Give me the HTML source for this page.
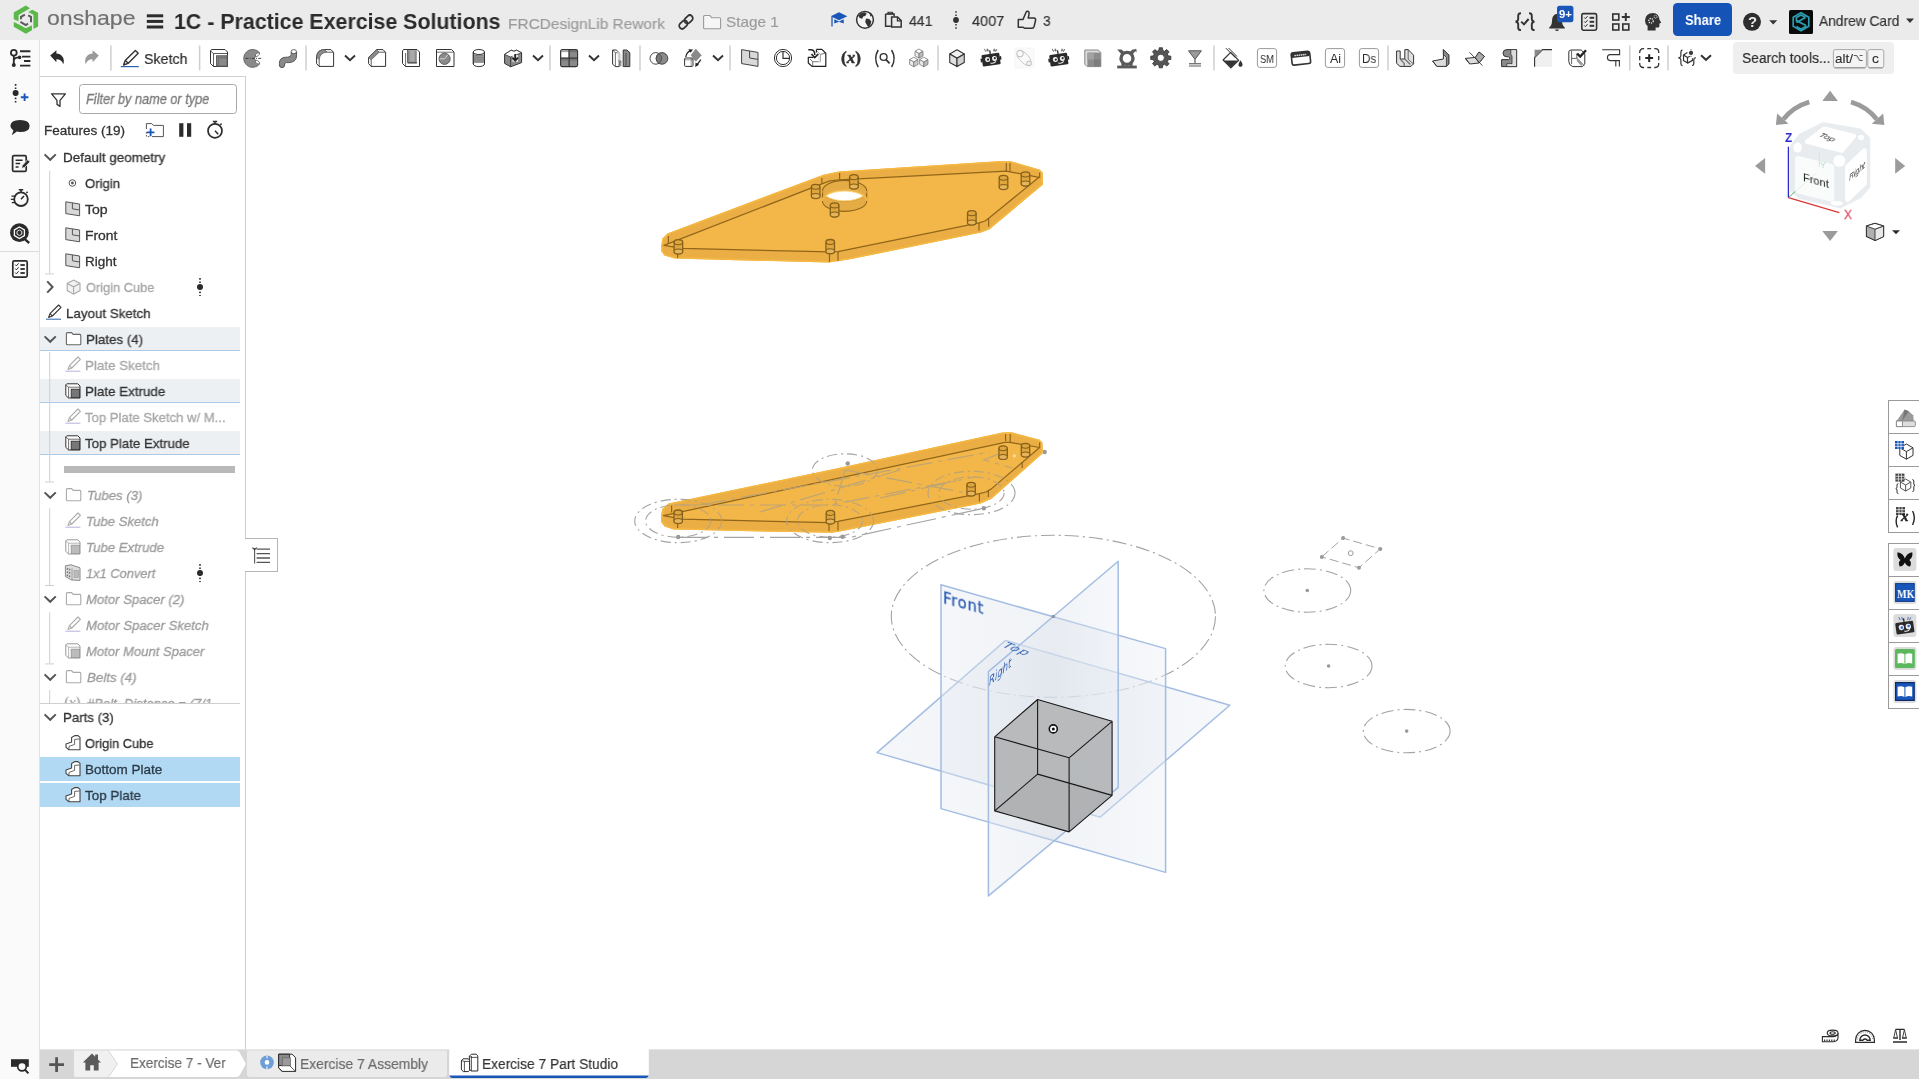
<!DOCTYPE html>
<html lang="en"><head><meta charset="utf-8"><title>1C - Practice Exercise Solutions | Exercise 7 Part Studio</title>
<style>
*{box-sizing:border-box;margin:0;padding:0}
html,body{width:1919px;height:1079px;overflow:hidden;background:#fff}
body{position:relative;font-family:"Liberation Sans",sans-serif;font-size:13.5px;color:#333}
.t{position:absolute;white-space:nowrap;transform-origin:0 0;display:block;will-change:transform}
.i{position:absolute;overflow:visible;display:block}
.b{position:absolute;display:block}
</style></head>
<body>
<div class="b" style="left:0px;top:0px;width:1919px;height:40px;background:#ebebeb"></div>
<div class="b" style="left:0px;top:40px;width:40px;height:1039px;background:#fafafa;border-right:1px solid #e2e2e2"></div>
<div class="b" style="left:40px;top:76px;width:206px;height:973px;border-top:1px solid #d0d0d0;border-right:1px solid #cfcfcf;background:#fff"></div>
<div class="b" style="left:40px;top:1049px;width:1879px;height:30px;background:#d6d6d6;border-top:1px solid #e6e6e6"></div>
<svg class="i" style="left:0;top:0" width="1919" height="1079" viewBox="0 0 1919 1079"><ellipse cx="1053.4" cy="616.3" rx="162.1" ry="81" fill="none" stroke="#a3a3a3" stroke-width="1.1" stroke-dasharray="14 4 2 4"/><ellipse cx="1307.3" cy="590.5" rx="43.4" ry="21.7" fill="none" stroke="#a3a3a3" stroke-width="1.1" stroke-dasharray="12 4 2 4"/><circle cx="1307.3" cy="590.5" r="1.8" fill="#999"/><ellipse cx="1328.6" cy="666" rx="43.4" ry="21.7" fill="none" stroke="#a3a3a3" stroke-width="1.1" stroke-dasharray="12 4 2 4"/><circle cx="1328.6" cy="666" r="1.8" fill="#999"/><ellipse cx="1406.7" cy="731.1" rx="43.4" ry="21.7" fill="none" stroke="#a3a3a3" stroke-width="1.1" stroke-dasharray="12 4 2 4"/><circle cx="1406.7" cy="731.1" r="1.8" fill="#999"/><polygon points="1321.8,556.9 1343.1,538.1 1380.3,548.9 1359.0,567.7" fill="none" stroke="#a3a3a3" stroke-width="1" stroke-dasharray="9 4"/><circle cx="1321.8" cy="556.9" r="2" fill="#999"/><circle cx="1343.1" cy="538.1" r="2" fill="#999"/><circle cx="1380.3" cy="548.9" r="2" fill="#999"/><circle cx="1359" cy="567.7" r="2" fill="#999"/><circle cx="1350.7" cy="553.2" r="2.4" fill="#fff" stroke="#999" stroke-width="1"/><ellipse cx="678.2" cy="521" rx="43.5" ry="21.7" fill="none" stroke="#a3a3a3" stroke-width="1.1" stroke-dasharray="10 4 2 4"/><ellipse cx="678.2" cy="521" rx="32.6" ry="16.2" fill="none" stroke="#a3a3a3" stroke-width="1.1" stroke-dasharray="10 4 2 4"/><ellipse cx="830" cy="521" rx="43.5" ry="21.7" fill="none" stroke="#a3a3a3" stroke-width="1.1" stroke-dasharray="10 4 2 4"/><ellipse cx="830" cy="521" rx="32.6" ry="16.2" fill="none" stroke="#a3a3a3" stroke-width="1.1" stroke-dasharray="10 4 2 4"/><ellipse cx="971.5" cy="493" rx="43.5" ry="21.7" fill="none" stroke="#a3a3a3" stroke-width="1.1" stroke-dasharray="10 4 2 4"/><ellipse cx="971.5" cy="493" rx="32.6" ry="16.2" fill="none" stroke="#a3a3a3" stroke-width="1.1" stroke-dasharray="10 4 2 4"/><ellipse cx="845" cy="470" rx="32.6" ry="16.2" fill="none" stroke="#a3a3a3" stroke-width="1.1" stroke-dasharray="10 4 2 4"/><path d="M678 537.4 H850 L985 508" fill="none" stroke="#a3a3a3" stroke-width="1.1" stroke-dasharray="30 6 4 6"/><circle cx="678.2" cy="537" r="2.2" fill="#999"/><circle cx="829.8" cy="538" r="2.2" fill="#999"/><circle cx="842.6" cy="536.7" r="2.2" fill="#999"/><circle cx="983.8" cy="508.3" r="2.2" fill="#999"/><circle cx="847.7" cy="463.5" r="2.2" fill="#999"/><circle cx="1044.7" cy="452" r="2.2" fill="#999"/><clipPath id="tp"><polygon points="661.2,245.5 662.5,238.5 667.5,233.4 823.5,174.7 839.0,171.6 998.0,161.2 1011.0,161.2 1040.0,169.8 1042.6,172.8 1043.0,184.5 989.5,229.2 981.0,232.6 850.0,259.3 829.0,262.6 675.0,258.6 664.5,255.6 661.5,251.5"/></clipPath><polygon points="661.2,245.5 662.5,238.5 667.5,233.4 823.5,174.7 839.0,171.6 998.0,161.2 1011.0,161.2 1040.0,169.8 1042.6,172.8 1043.0,184.5 989.5,229.2 981.0,232.6 850.0,259.3 829.0,262.6 675.0,258.6 664.5,255.6 661.5,251.5" fill="#ebae45"/><polygon points="661.2,245.5 662.5,238.5 667.5,233.4 823.5,174.7 839.0,171.6 998.0,161.2 1011.0,161.2 1040.0,169.8 1042.6,172.8 1043.0,184.5 989.5,229.2 981.0,232.6 850.0,259.3 829.0,262.6 675.0,258.6 664.5,255.6 661.5,251.5" fill="none" stroke="#f5b841" stroke-width="3" stroke-linejoin="round" clip-path="url(#tp)"/><polygon points="663.9,245.4 821.9,183.9 830.0,180.8 839.1,179.8 1006.3,171.1 1039.0,177.3 989.0,217.9 985.0,221.0 979.0,222.9 838.0,251.6 829.5,251.9 682.3,248.4" fill="#f2b649" stroke="#91661a" stroke-width="1.25" stroke-linejoin="round"/><path d="M829.5 252 L829.5 262" stroke="#91661a" stroke-width="1.2" fill="none"/><path d="M838 251.6 L838 261" stroke="#91661a" stroke-width="1.2" fill="none"/><path d="M979 223 L979 230.8" stroke="#91661a" stroke-width="1.2" fill="none"/><path d="M988.6 218.4 L988.6 226.8" stroke="#91661a" stroke-width="1.2" fill="none"/><path d="M1006.3 163 L1006.3 171" stroke="#91661a" stroke-width="1.2" fill="none"/><path d="M1010 163 L1010 171.4" stroke="#91661a" stroke-width="1.2" fill="none"/><path d="M1039.6 172.6 L1039.6 178" stroke="#91661a" stroke-width="1.2" fill="none"/><path d="M821.9 177.8 L821.9 184" stroke="#91661a" stroke-width="1.2" fill="none"/><path d="M839.6 173 L839.6 179.6" stroke="#91661a" stroke-width="1.2" fill="none"/><path d="M668.4 236 L668.4 243.4" stroke="#91661a" stroke-width="1.2" fill="none"/><path d="M677.6 249 L677.6 258" stroke="#91661a" stroke-width="1.2" fill="none"/><path d="M822.5 190.9 A22.1 10.5 0 0 1 866.7 190.9 V200.9 A22.1 10.5 0 0 1 822.5 200.9 Z" fill="#e5ab45" stroke="#91661a" stroke-width="1.1"/><path d="M822.5 190.9 A22.1 10.5 0 0 0 866.7 190.9" fill="none" stroke="#d9a03a" stroke-width="1"/><path d="M822.5 200.9 A22.1 10.5 0 0 1 866.7 200.9" fill="none" stroke="#efb548" stroke-width="2.4"/><path d="M826.0 195.9 A22.1 10.5 0 0 1 863.2 195.9 A22.1 10.5 0 0 1 826.0 195.9 Z" fill="#fff" stroke="#f8d078" stroke-width=".8" stroke-linejoin="round"/><path d="M674.1 242.2 v9.2 a4.3 2.5 0 0 0 8.6 0 v-9.2 a4.3 2.5 0 0 0 -8.6 0z" fill="#dfa63f" stroke="#86611a" stroke-width="1.3"/><ellipse cx="678.4" cy="251.4" rx="4.3" ry="2.5" fill="#e6b55a" stroke="#86611a" stroke-width="1.04"/><path d="M674.1 242.2 a4.3 2.5 0 0 0 8.6 0" fill="none" stroke="#86611a" stroke-width="1.04"/><path d="M825.9 242.0 v9.2 a4.3 2.5 0 0 0 8.6 0 v-9.2 a4.3 2.5 0 0 0 -8.6 0z" fill="#dfa63f" stroke="#86611a" stroke-width="1.3"/><ellipse cx="830.2" cy="251.2" rx="4.3" ry="2.5" fill="#e6b55a" stroke="#86611a" stroke-width="1.04"/><path d="M825.9 242.0 a4.3 2.5 0 0 0 8.6 0" fill="none" stroke="#86611a" stroke-width="1.04"/><path d="M811.4 186.8 v9.2 a4.3 2.5 0 0 0 8.6 0 v-9.2 a4.3 2.5 0 0 0 -8.6 0z" fill="#dfa63f" stroke="#86611a" stroke-width="1.3"/><ellipse cx="815.7" cy="196.0" rx="4.3" ry="2.5" fill="#e6b55a" stroke="#86611a" stroke-width="1.04"/><path d="M811.4 186.8 a4.3 2.5 0 0 0 8.6 0" fill="none" stroke="#86611a" stroke-width="1.04"/><path d="M830.3 205.4 v9.2 a4.3 2.5 0 0 0 8.6 0 v-9.2 a4.3 2.5 0 0 0 -8.6 0z" fill="#dfa63f" stroke="#86611a" stroke-width="1.3"/><ellipse cx="834.6" cy="214.6" rx="4.3" ry="2.5" fill="#e6b55a" stroke="#86611a" stroke-width="1.04"/><path d="M830.3 205.4 a4.3 2.5 0 0 0 8.6 0" fill="none" stroke="#86611a" stroke-width="1.04"/><path d="M849.6 177.2 v9.2 a4.3 2.5 0 0 0 8.6 0 v-9.2 a4.3 2.5 0 0 0 -8.6 0z" fill="#dfa63f" stroke="#86611a" stroke-width="1.3"/><ellipse cx="853.9" cy="186.4" rx="4.3" ry="2.5" fill="#e6b55a" stroke="#86611a" stroke-width="1.04"/><path d="M849.6 177.2 a4.3 2.5 0 0 0 8.6 0" fill="none" stroke="#86611a" stroke-width="1.04"/><path d="M999.2 177.8 v9.2 a4.3 2.5 0 0 0 8.6 0 v-9.2 a4.3 2.5 0 0 0 -8.6 0z" fill="#dfa63f" stroke="#86611a" stroke-width="1.3"/><ellipse cx="1003.5" cy="187.0" rx="4.3" ry="2.5" fill="#e6b55a" stroke="#86611a" stroke-width="1.04"/><path d="M999.2 177.8 a4.3 2.5 0 0 0 8.6 0" fill="none" stroke="#86611a" stroke-width="1.04"/><path d="M1021.2 174.4 v9.2 a4.3 2.5 0 0 0 8.6 0 v-9.2 a4.3 2.5 0 0 0 -8.6 0z" fill="#dfa63f" stroke="#86611a" stroke-width="1.3"/><ellipse cx="1025.5" cy="183.6" rx="4.3" ry="2.5" fill="#e6b55a" stroke="#86611a" stroke-width="1.04"/><path d="M1021.2 174.4 a4.3 2.5 0 0 0 8.6 0" fill="none" stroke="#86611a" stroke-width="1.04"/><path d="M967.5 213.2 v9.2 a4.3 2.5 0 0 0 8.6 0 v-9.2 a4.3 2.5 0 0 0 -8.6 0z" fill="#dfa63f" stroke="#86611a" stroke-width="1.3"/><ellipse cx="971.8" cy="222.4" rx="4.3" ry="2.5" fill="#e6b55a" stroke="#86611a" stroke-width="1.04"/><path d="M967.5 213.2 a4.3 2.5 0 0 0 8.6 0" fill="none" stroke="#86611a" stroke-width="1.04"/><clipPath id="bp0"><polygon points="660.9,516.0 662.6,508.5 668.6,503.4 840.0,467.8 1002.5,432.4 1011.4,432.2 1039.5,439.8 1042.4,442.6 1042.8,453.3 991.5,498.7 980.7,503.4 845.0,530.6 832.0,532.8 673.7,529.6 664.5,526.5 661.2,522.0"/></clipPath><polygon points="660.9,516.0 662.6,508.5 668.6,503.4 840.0,467.8 1002.5,432.4 1011.4,432.2 1039.5,439.8 1042.4,442.6 1042.8,453.3 991.5,498.7 980.7,503.4 845.0,530.6 832.0,532.8 673.7,529.6 664.5,526.5 661.2,522.0" fill="#ebae45"/><polygon points="660.9,516.0 662.6,508.5 668.6,503.4 840.0,467.8 1002.5,432.4 1011.4,432.2 1039.5,439.8 1042.4,442.6 1042.8,453.3 991.5,498.7 980.7,503.4 845.0,530.6 832.0,532.8 673.7,529.6 664.5,526.5 661.2,522.0" fill="none" stroke="#f5b841" stroke-width="3" stroke-linejoin="round" clip-path="url(#bp0)"/><polygon points="663.5,515.7 1005.0,442.4 1010.1,442.4 1039.6,447.5 991.0,489.1 986.0,492.0 979.4,493.6 838.0,521.4 828.0,522.6 682.7,519.1" fill="#f2b649" stroke="#91661a" stroke-width="1.25" stroke-linejoin="round"/><path d="M1005.6 434 L1005.6 441" stroke="#91661a" stroke-width="1.2" fill="none"/><path d="M1010.2 434 L1010.2 442.4" stroke="#91661a" stroke-width="1.2" fill="none"/><path d="M979.4 494 L979.4 501.4" stroke="#91661a" stroke-width="1.2" fill="none"/><path d="M988.4 490.4 L988.4 497" stroke="#91661a" stroke-width="1.2" fill="none"/><path d="M1022.2 462 L1022.2 468" stroke="#91661a" stroke-width="1.2" fill="none"/><path d="M829 523 L829 531" stroke="#91661a" stroke-width="1.2" fill="none"/><path d="M838 521.4 L838 530.4" stroke="#91661a" stroke-width="1.2" fill="none"/><path d="M671.6 505.4 L671.6 512.6" stroke="#91661a" stroke-width="1.2" fill="none"/><path d="M677.6 520 L677.6 528" stroke="#91661a" stroke-width="1.2" fill="none"/><path d="M1039.6 442.6 L1039.6 448" stroke="#91661a" stroke-width="1.2" fill="none"/><clipPath id="bp"><polygon points="660.9,516.0 662.6,508.5 668.6,503.4 840.0,467.8 1002.5,432.4 1011.4,432.2 1039.5,439.8 1042.4,442.6 1042.8,453.3 991.5,498.7 980.7,503.4 845.0,530.6 832.0,532.8 673.7,529.6 664.5,526.5 661.2,522.0"/></clipPath><g clip-path="url(#bp)" opacity=".9"><ellipse cx="678.2" cy="521" rx="43.5" ry="21.7" fill="none" stroke="#b9a37a" stroke-width="1.1" stroke-dasharray="10 4 2 4"/><ellipse cx="678.2" cy="521" rx="32.6" ry="16.2" fill="none" stroke="#b9a37a" stroke-width="1.1" stroke-dasharray="10 4 2 4"/><ellipse cx="830" cy="521" rx="43.5" ry="21.7" fill="none" stroke="#b9a37a" stroke-width="1.1" stroke-dasharray="10 4 2 4"/><ellipse cx="830" cy="521" rx="32.6" ry="16.2" fill="none" stroke="#b9a37a" stroke-width="1.1" stroke-dasharray="10 4 2 4"/><ellipse cx="971.5" cy="493" rx="43.5" ry="21.7" fill="none" stroke="#b9a37a" stroke-width="1.1" stroke-dasharray="10 4 2 4"/><ellipse cx="971.5" cy="493" rx="32.6" ry="16.2" fill="none" stroke="#b9a37a" stroke-width="1.1" stroke-dasharray="10 4 2 4"/><ellipse cx="845" cy="470" rx="32.6" ry="16.2" fill="none" stroke="#b9a37a" stroke-width="1.1" stroke-dasharray="10 4 2 4"/><path d="M676 505 H830 L975 477 M845 470 L972 494 M1003 452 L984 460 L1012 468 M700 505 L990 452 M760 512 L900 470 M880 498 L960 480 M845 470 L830 521" fill="none" stroke="#b9a37a" stroke-width="1.2" stroke-dasharray="26 6 4 6"/></g><path d="M674.0 512.5 v8.6 a4.2 2.5 0 0 0 8.4 0 v-8.6 a4.2 2.5 0 0 0 -8.4 0z" fill="#dfa63f" stroke="#86611a" stroke-width="1.3"/><ellipse cx="678.2" cy="521.1" rx="4.2" ry="2.5" fill="#e6b55a" stroke="#86611a" stroke-width="1.04"/><path d="M674.0 512.5 a4.2 2.5 0 0 0 8.4 0" fill="none" stroke="#86611a" stroke-width="1.04"/><path d="M826.2 512.9 v8.6 a4.2 2.5 0 0 0 8.4 0 v-8.6 a4.2 2.5 0 0 0 -8.4 0z" fill="#dfa63f" stroke="#86611a" stroke-width="1.3"/><ellipse cx="830.4" cy="521.5" rx="4.2" ry="2.5" fill="#e6b55a" stroke="#86611a" stroke-width="1.04"/><path d="M826.2 512.9 a4.2 2.5 0 0 0 8.4 0" fill="none" stroke="#86611a" stroke-width="1.04"/><path d="M966.9 484.8 v8.6 a4.2 2.5 0 0 0 8.4 0 v-8.6 a4.2 2.5 0 0 0 -8.4 0z" fill="#dfa63f" stroke="#86611a" stroke-width="1.3"/><ellipse cx="971.1" cy="493.4" rx="4.2" ry="2.5" fill="#e6b55a" stroke="#86611a" stroke-width="1.04"/><path d="M966.9 484.8 a4.2 2.5 0 0 0 8.4 0" fill="none" stroke="#86611a" stroke-width="1.04"/><path d="M998.9 448.3 v8.6 a4.2 2.5 0 0 0 8.4 0 v-8.6 a4.2 2.5 0 0 0 -8.4 0z" fill="#dfa63f" stroke="#86611a" stroke-width="1.3"/><ellipse cx="1003.1" cy="456.9" rx="4.2" ry="2.5" fill="#e6b55a" stroke="#86611a" stroke-width="1.04"/><path d="M998.9 448.3 a4.2 2.5 0 0 0 8.4 0" fill="none" stroke="#86611a" stroke-width="1.04"/><path d="M1021.3 445.8 v8.6 a4.2 2.5 0 0 0 8.4 0 v-8.6 a4.2 2.5 0 0 0 -8.4 0z" fill="#dfa63f" stroke="#86611a" stroke-width="1.3"/><ellipse cx="1025.5" cy="454.4" rx="4.2" ry="2.5" fill="#e6b55a" stroke="#86611a" stroke-width="1.04"/><path d="M1021.3 445.8 a4.2 2.5 0 0 0 8.4 0" fill="none" stroke="#86611a" stroke-width="1.04"/><circle cx="1014.4" cy="455.8" r="1.6" fill="#f3dcae"/><linearGradient id="pg" x1="0" y1="0" x2="1" y2="0"><stop offset="0" stop-color="#e6ebf2" stop-opacity=".42"/><stop offset=".5" stop-color="#dbe1ea" stop-opacity=".4"/><stop offset="1" stop-color="#eaeff5" stop-opacity=".42"/></linearGradient><polygon points="877.0,752.6 1005.6,640.4 1229.8,705.2 1100.2,817.1" fill="url(#pg)" stroke="#a3bde2" stroke-width="1.5" stroke-linejoin="round"/><polygon points="941.0,584.8 1165.6,648.6 1165.6,872.4 941.0,808.6" fill="url(#pg)" stroke="#a3bde2" stroke-width="1.5" stroke-linejoin="round"/><polygon points="1118.2,561.2 1118.2,787.4 988.4,895.9 988.4,671.6" fill="url(#pg)" stroke="#a3bde2" stroke-width="1.5" stroke-linejoin="round"/><circle cx="1053.3" cy="616.5" r="1.8" fill="#8a98a8"/><polygon points="994.7,736.8 1037.6,699.5 1112.1,721.3 1112.1,795.4 1069.1,831.9 994.7,810.9" fill="#b3b5b7" fill-opacity=".93"/><polygon points="994.7,736.8 1037.6,699.5 1112.1,721.3 1069.1,757.8" fill="#b9bbbd" fill-opacity=".6"/><polygon points="994.7,736.8 1069.1,757.8 1069.1,831.9 994.7,810.9" fill="#b6b8ba" fill-opacity=".5"/><polygon points="994.7,810.9 1037.6,774.1 1112.1,795.4 1069.1,831.9" fill="#a9abad" fill-opacity=".5"/><path d="M994.7 736.8 L1037.6 699.5 L1112.1 721.3 L1069.1 757.8z M994.7 810.9 L1037.6 774.1 L1112.1 795.4 L1069.1 831.9z M994.7 736.8 L994.7 810.9 M1037.6 699.5 L1037.6 774.1 M1112.1 721.3 L1112.1 795.4 M1069.1 757.8 L1069.1 831.9" fill="none" stroke="#1a1a1a" stroke-width="1.1" stroke-linejoin="round"/><path d="M1118.2 721 V787.4 L1100 802 M1069 831 L1165.6 858" stroke="#a3bde2" stroke-width="1.2" fill="none" opacity=".0"/><circle cx="1053.3" cy="728.9" r="4" fill="#fff" stroke="#111" stroke-width="1.6"/><circle cx="1053.3" cy="728.9" r="1.5" fill="#111"/></svg>
<span class="t" style="left:943px;top:589px;font-family:'DejaVu Sans',sans-serif;font-size:15.5px;line-height:18px;letter-spacing:.7px;color:#2f5fb3;-webkit-text-stroke:.3px #2f5fb3;transform:matrix(.96,.26,0,1,0,0)">Front</span>
<span class="t" style="left:1008.5px;top:639.5px;font-family:'DejaVu Sans',sans-serif;font-size:14px;line-height:16px;letter-spacing:1px;color:#2f5fb3;font-style:italic;transform:matrix(.9,.36,-.55,.5,0,0)">Top</span>
<span class="t" style="left:988.8px;top:675px;font-family:'DejaVu Sans',sans-serif;font-size:12.5px;line-height:14px;color:#2f5fb3;font-style:italic;transform:matrix(.68,-.6,0,1,0,0)">Right</span>
<svg class="i" style="left:0;top:0" width="1919" height="40" viewBox="0 0 1919 40"><polygon points="13.75,12.42 25.80,5.56 30.06,8.23 18.57,15.02 18.57,21.32 13.75,19.28" fill="#5ab947"/><polygon points="32.29,9.71 38.11,12.79 38.11,26.62 33.40,29.11 33.40,14.65 28.21,11.94" fill="#5ab947"/><polygon points="13.75,21.88 18.01,24.10 25.80,28.36 31.92,25.21 31.92,30.22 25.80,33.82 13.75,26.77" fill="#5ab947"/><path d="M24.87,14.65 L20.98,16.87 L20.98,19.28 M20.42,21.88 L25.80,25.03 L28.02,23.73 M30.99,22.25 L30.99,16.87 L28.21,15.39" fill="none" stroke="#5a5a5a" stroke-width="2"/><rect x="146.8" y="14.3" width="16.4" height="3" fill="#2b2b2b"/><rect x="146.8" y="19.9" width="16.4" height="3" fill="#2b2b2b"/><rect x="146.8" y="25.5" width="16.4" height="3" fill="#2b2b2b"/><g transform="translate(686,22) rotate(-45)" fill="none" stroke="#333" stroke-width="1.7"><rect x="-8.4" y="-3" width="9.4" height="6" rx="3"/><rect x="-1" y="-3" width="9.4" height="6" rx="3"/></g><path d="M703.6 16.5 a1 1 0 0 1 1 -1 h5.2 l1.8 2.2 h8 a1 1 0 0 1 1 1 v9 a1 1 0 0 1 -1 1 h-15 a1 1 0 0 1 -1 -1 z" fill="#f6f6f6" stroke="#9a9a9a" stroke-width="1.1"/><path d="M839 12.3 l8.3 3.9 l-8.3 4 l-8.3 -4 z" fill="#1a56b8"/><path d="M834.3 19.3 v4.2 l4.7 -1.8 l4.7 1.8 v-4.2 l-4.7 2.2 z" fill="#1a56b8"/><path d="M832 17 v9.5" stroke="#1a56b8" stroke-width="1.3" fill="none"/><circle cx="865" cy="19.8" r="8.4" fill="#f4f4f4" stroke="#333" stroke-width="1.5"/><path d="M860.5 13.5 l4 -1.2 l2.2 1.5 l-1.5 2.2 l-2 0.5 l-1 2.3 l-2.5 -0.8 l-1.2 -2 z M866 18.5 l3.2 0.6 l2.2 2.4 l-1 3.4 l-2.2 2.4 l-1.4 -2.6 l-1.6 -2.6 z M869.5 13.2 l2.4 2.5 l-1.6 0.8 z" fill="#333"/><path d="M885.6 14 h8.5 v2.4 M885.6 14 v12.2 h5.2" fill="none" stroke="#333" stroke-width="1.5"/><rect x="888" y="12.3" width="4.6" height="1.6" fill="none" stroke="#333" stroke-width="1"/><path d="M891.6 17 h6 l3.6 3.6 v6.4 h-9.6 z" fill="none" stroke="#333" stroke-width="1.5"/><path d="M897.4 17 v3.8 h3.8" fill="none" stroke="#333" stroke-width="1.2"/><circle cx="956" cy="20" r="2.9" fill="#333"/><path d="M956 11.2 v18" stroke="#333" stroke-width="1.5" stroke-dasharray="1.6 1.6" fill="none"/><path d="M1018.3 19.6 h4.6 l3.2 -7.4 q0.6 -1.3 1.8 -0.9 q1.6 0.6 1.2 2.6 l-0.9 4.2 h5.8 q1.9 0.2 1.6 2.2 l-1.5 6.2 q-0.5 1.7 -2 1.7 h-7.6 l-1.8 -1 h-4.4 z" fill="none" stroke="#333" stroke-width="1.5" stroke-linejoin="round"/><g fill="none" stroke="#333" stroke-width="1.9"><path d="M1521 13.3 q-2.800 0 -2.800 2.400 v3.400 q0 2.200 -2.600 2.600 q2.600 0.400 2.600 2.600 v3.400 q0 2.400 2.800 2.400"/><path d="M1529 13.3 q2.800 0 2.800 2.400 v3.400 q0 2.200 2.600 2.600 q-2.600 0.400 -2.600 2.600 v3.400 q0 2.400 2.800 2.400"/><path d="M1521.2 21.6 l2.8 2.8 l4.6 -5.4" stroke-width="2"/></g><path d="M1557 13.8 q-5 0.8 -5 7.2 q0 4.2 -2.8 6.4 v1.2 h15.6 v-1.2 q-2.8 -2.2 -2.8 -6.4 q0 -6.4 -5 -7.2 z M1555 29.4 h4 q-0.4 1.6 -2 1.6 t-2 -1.6z" fill="#333"/><rect x="1557" y="5.8" width="16.4" height="16.4" rx="2.5" fill="#1a56b8"/><rect x="1581.8" y="13.6" width="14.8" height="16.6" rx="1.6" fill="none" stroke="#333" stroke-width="1.6"/><path d="M1589.6 17.8 h4.6" stroke="#333" stroke-width="2" fill="none"/><path d="M1584.2 17.400000000000002 l1.2 1.3 l2.2 -2.6" stroke="#333" stroke-width="1" fill="none"/><path d="M1589.6 21.8 h4.6" stroke="#333" stroke-width="2" fill="none"/><path d="M1584.2 21.400000000000002 l1.2 1.3 l2.2 -2.6" stroke="#333" stroke-width="1" fill="none"/><path d="M1589.6 25.8 h4.6" stroke="#333" stroke-width="2" fill="none"/><path d="M1584.2 25.400000000000002 l1.2 1.3 l2.2 -2.6" stroke="#333" stroke-width="1" fill="none"/><g fill="none" stroke="#333" stroke-width="1.6"><rect x="1612.8" y="14" width="6" height="6"/><rect x="1612.8" y="24" width="6" height="6"/><rect x="1622.8" y="24" width="6" height="6"/><path d="M1625.8 13 v8 M1621.8 17 h8" stroke-width="2"/></g><path d="M1653 13 q-7.6 0.4 -8 7.4 q0 3.4 2.6 5.6 v4.6 h8 v-3 h2.4 q1.4 0 1.4 -1.6 v-2.4 l1.8 -0.8 l-1.8 -3.4 q-0.4 -6.2 -6.4 -6.4 z" fill="#333"/><circle cx="1651" cy="20.8" r="2.3" fill="none" stroke="#ebebeb" stroke-width="1.3" stroke-dasharray="1.2 0.9"/><circle cx="1655.6" cy="16.8" r="1.5" fill="none" stroke="#ebebeb" stroke-width="1" stroke-dasharray="0.9 0.7"/><rect x="1673" y="3" width="59" height="33" rx="4.5" fill="#1553b7"/><circle cx="1752" cy="21.8" r="9" fill="#2e2e2e"/><path d="M1769.2 20.2 h8 l-4 4.4 z" fill="#333"/><rect x="1789" y="10" width="24" height="24" rx="1.5" fill="#0a0a0a"/><g fill="none" stroke="#2a9db0" stroke-width="1.7"><path d="M1801 12.8 l7.8 4.5 v9 l-7.8 4.5 l-7.8 -4.5 v-9 z"/><path d="M1805.6 17.6 l-4.6 -2.6 l-4.6 2.6 v3 l9.2 4.6 v1.4 l-4.6 2.6 l-4.6 -2.6 M1796.4 22.6 l9.2 -5"/></g><path d="M1906 18.6 h8 l-4 4.4 z" fill="#333"/></svg>
<span class="t" style="left:46.58px;top:6px;font-size:20.5px;line-height:23px;color:#707070;-webkit-text-stroke:0.18px #707070;transform:scaleX(1.1252);">onshape</span>
<span class="t" style="left:174.32px;top:9px;font-size:21.8px;line-height:25px;color:#2b2b2b;font-weight:700;transform:scaleX(0.9800);">1C - Practice Exercise Solutions</span>
<span class="t" style="left:508.27px;top:15px;font-size:15.5px;line-height:17px;color:#9b9b9b;-webkit-text-stroke:0.18px #9b9b9b;transform:scaleX(0.9949);">FRCDesignLib Rework</span>
<span class="t" style="left:725.81px;top:13px;font-size:15px;line-height:17px;color:#9b9b9b;-webkit-text-stroke:0.18px #9b9b9b;transform:scaleX(1.0194);">Stage 1</span>
<span class="t" style="left:909.12px;top:12px;font-size:15px;line-height:17px;color:#333;-webkit-text-stroke:0.18px #333;transform:scaleX(0.9375);">441</span>
<span class="t" style="left:971.61px;top:12px;font-size:15px;line-height:17px;color:#333;-webkit-text-stroke:0.18px #333;transform:scaleX(0.9683);">4007</span>
<span class="t" style="left:1043.25px;top:12px;font-size:15px;line-height:17px;color:#333;-webkit-text-stroke:0.18px #333;transform:scaleX(0.9123);">3</span>
<span class="t" style="left:1559.01px;top:8px;font-size:10.5px;line-height:12px;color:#fff;font-weight:700;transform:scaleX(1.0731);">9+</span>
<span class="t" style="left:1684.61px;top:11px;font-size:15.5px;line-height:17px;color:#fff;font-weight:700;transform:scaleX(0.8388);">Share</span>
<span class="t" style="left:1747.53px;top:14px;font-size:14.5px;line-height:16px;color:#ebebeb;font-weight:700;transform:scaleX(1.0277);">?</span>
<span class="t" style="left:1819.00px;top:12px;font-size:15px;line-height:17px;color:#333;-webkit-text-stroke:0.18px #333;transform:scaleX(0.9174);">Andrew Card</span>
<svg class="i" style="left:0;top:0" width="1919" height="80" viewBox="0 0 1919 80"><g fill="none" stroke="#2b2b2b" stroke-width="1.8"><circle cx="13.8" cy="52.8" r="2.9"/><path d="M13.8 55.8 v8.2 M13.8 60.5 q0 -2.6 4.8 -3.2"/><path d="M20 51.2 h10.4 M22 56.6 h8.4 M24 61 h6.4 M20 65.6 h10.4" stroke-width="1.9"/></g><circle cx="13.8" cy="65" r="2" fill="#2b2b2b"/><circle cx="19.6" cy="57.4" r="1.8" fill="#2b2b2b"/><path d="M50.2 55.6 l6.2 -5.4 v3.4 q6.6 0.4 7.4 7 q0.2 2 -0.6 3.6 q-1.4 -5 -6.8 -5 v3 z" fill="#2b2b2b"/><path d="M98.8 55.6 l-6.2 -5.4 v3.4 q-6.6 0.4 -7.4 7 q-0.2 2 0.6 3.6 q1.4 -5 6.8 -5 v3 z" fill="#9a9a9a"/><rect x="110.15" y="45.5" width="1.5" height="25" fill="#cfcfcf"/><rect x="198.85" y="45.5" width="1.5" height="25" fill="#cfcfcf"/><rect x="305.25" y="45.5" width="1.5" height="25" fill="#cfcfcf"/><rect x="549.25" y="45.5" width="1.5" height="25" fill="#cfcfcf"/><rect x="639.25" y="45.5" width="1.5" height="25" fill="#cfcfcf"/><rect x="729.25" y="45.5" width="1.5" height="25" fill="#cfcfcf"/><rect x="937.25" y="45.5" width="1.5" height="25" fill="#cfcfcf"/><rect x="1213.25" y="45.5" width="1.5" height="25" fill="#cfcfcf"/><rect x="1387.25" y="45.5" width="1.5" height="25" fill="#cfcfcf"/><rect x="1629.05" y="45.5" width="1.5" height="25" fill="#cfcfcf"/><rect x="1667.25" y="45.5" width="1.5" height="25" fill="#cfcfcf"/><g fill="none" stroke="#333" stroke-width="1.4" stroke-linejoin="round"><path d="M123.6 65 l1.6 -4.4 l10.2 -10.2 l2.8 2.8 l-10.2 10.2 z"/><path d="M125.4 60.4 l2.8 2.8"/></g><path d="M120.8 66.6 h18" stroke="#2a62b0" stroke-width="1.2"/><g transform="translate(210,49) scale(1)"><path d="M1.5 .5 h13.5 l2.5 2.5 v14.5 h-14 l-3 -3 v-12.5 z" fill="#fff" stroke="#333" stroke-width="1"/><path d="M.5 2 l3 2.5 h14 M3.5 4.5 v13" fill="none" stroke="#333" stroke-width=".8"/><rect x="6.6" y="6.8" width="10.6" height="10.4" fill="#8a8a8a" stroke="#555" stroke-width="1"/><path d="M6.6 6.8 l2 2 h8.6 M8.6 8.8 v8.4" stroke="#666" stroke-width=".8" fill="none"/></g><g transform="translate(244.4,49) scale(1)"><path d="M9.2 9.4 L15.6 4.2 A9 9 0 1 0 15.6 14.6 Z" fill="#8a8a8a" stroke="#555" stroke-width=".8"/><ellipse cx="13" cy="5.6" rx="2.3" ry="1.4" transform="rotate(-40 13 5.6)" fill="#fff" stroke="#555" stroke-width=".7"/><ellipse cx="13" cy="13.2" rx="2.3" ry="1.4" transform="rotate(40 13 13.2)" fill="#fff" stroke="#555" stroke-width=".7"/><path d="M1 9.4 h17" stroke="#333" stroke-width=".9" stroke-dasharray="3 1.2 1 1.2"/></g><g transform="translate(277.8,49) scale(1)"><path d="M13.4 3 v2.6 q0 2.4 -3.4 2.6 h-2 q-6.4 .4 -6.4 6.2 v1.6 q0 2.6 2.6 2.6 t2.6 -2.6 v-1 q0 -1.4 1.8 -1.4 h2.4 q7.8 -.4 7.8 -7.4 v-3.2 z" fill="#8a8a8a" stroke="#555" stroke-width="1"/><ellipse cx="16" cy="2.6" rx="2.7" ry="2" fill="#fff" stroke="#555" stroke-width=".9"/></g><g transform="translate(316,49) scale(1)"><path d="M.6 8 q.4 -7.4 8 -7.4 h6.4 l2.6 2.8 v14 h-14.6 l-2.4 -2.8 z" fill="#fff" stroke="#333" stroke-width="1"/><path d="M.6 8 q.4 -7.4 8 -7.4 l2.6 2.6 q-7.4 .2 -8 7.6 z" fill="#8a8a8a" stroke="#555" stroke-width=".7"/><path d="M3.2 10.8 v6.6 M11.2 3.2 h6.2" stroke="#333" stroke-width=".8" fill="none"/></g><path d="M345 55.6 l5 4.6 l5 -4.6" fill="none" stroke="#333" stroke-width="2"/><g transform="translate(368,49) scale(1)"><path d="M.6 8.4 l8 -7.8 h6.4 l2.6 2.8 v14 h-14.6 l-2.4 -2.8 z" fill="#fff" stroke="#333" stroke-width="1"/><path d="M.6 8.4 l8 -7.8 l2.6 2.6 l-8 7.6 z" fill="#8a8a8a" stroke="#555" stroke-width=".7"/><path d="M3.2 10.8 v6.6 M11.2 3.2 h6.2" stroke="#333" stroke-width=".8" fill="none"/></g><g transform="translate(402,49) scale(1)"><path d="M1.5 .5 h13.5 l2.5 2.5 v14.5 h-14 l-3 -3 v-12.5 z" fill="#fff" stroke="#333" stroke-width="1"/><path d="M5.6 1.2 h9.2 v13.6 h-9.2 z" fill="#8a8a8a"/><path d="M7.6 1.2 h5.2 v11.4 h-5.2 z" fill="#a8a8a8"/><path d="M3.6 4 v13.4 M5.6 1 v12.6 h9.4" fill="none" stroke="#444" stroke-width=".8"/></g><g transform="translate(436,49) scale(1)"><path d="M.5 .5 h15 l2.5 2.5 v14.5 h-17.5 z" fill="#fff" stroke="#333" stroke-width="1"/><circle cx="8.6" cy="9.8" r="5.6" fill="#8a8a8a" stroke="#555" stroke-width=".9"/><path d="M8.6 9.8 l3.2 -4 M8.6 9.8 h-5" stroke="#ddd" stroke-width=".9"/><path d="M.5 3.2 h17" stroke="#333" stroke-width=".7"/></g><g transform="translate(472.8,49) scale(1)"><path d="M.5 3 v12 a5.6 2.6 0 0 0 11.2 0 v-12" fill="#fff" stroke="#333" stroke-width="1"/><rect x=".8" y="5.4" width="10.6" height="8.6" fill="#9a9a9a"/><path d="M.8 6.6 h10.6 M.8 8.4 h10.6 M.8 10.2 h10.6 M.8 12 h10.6" stroke="#777" stroke-width=".7"/><ellipse cx="6.1" cy="3" rx="5.6" ry="2.5" fill="#fff" stroke="#333" stroke-width="1"/><path d="M.5 3 v12 M11.7 3 v12" stroke="#333" stroke-width="1"/></g><g transform="translate(504,49) scale(1)"><path d="M.6 5.4 l6.6 -4.2 q2.6 2.2 5.4 0 l5 2.6 v9.8 l-11 4.2 l-6 -3.4 z" fill="#8a8a8a" stroke="#333" stroke-width="1"/><path d="M6.6 8 l11 -4.2 l-5 -2.6 q-2.8 2.2 -5.4 0 l-6.6 4.2 z" fill="#fff" stroke="#333" stroke-width=".8"/><path d="M6.6 8 v9.6" stroke="#333" stroke-width=".8"/><path d="M8.4 6 h5.6 v6.8 h-5.6 z" fill="#eee" opacity=".9"/><path d="M11.2 5 v6 M8.4 8.6 l2.8 3 l2.8 -3" fill="none" stroke="#222" stroke-width="1.8"/></g><path d="M533 55.6 l5 4.6 l5 -4.6" fill="none" stroke="#333" stroke-width="2"/><g transform="translate(560,49) scale(1)"><rect x=".6" y=".6" width="17" height="17" rx="1.6" fill="#8a8a8a" stroke="#333" stroke-width="1.1"/><rect x="1.4" y="1.6" width="7.2" height="7.2" fill="#fff"/><path d="M9.1 .6 v17 M.6 9.2 h17" stroke="#333" stroke-width="1.2"/><path d="M1.2 2.6 h7.4 M10 2.6 h7 M10 11 h7 M1.2 11 h7.4" stroke="#555" stroke-width=".6"/></g><path d="M589 55.6 l5 4.6 l5 -4.6" fill="none" stroke="#333" stroke-width="2"/><g transform="translate(612,49) scale(1)"><path d="M.6 1 h3.6 l3 2.6 v14 h-4 l-2.6 -2.6 z" fill="#fff" stroke="#333" stroke-width="1"/><path d="M3.4 3.8 v13.6 M.6 1 l2.8 2.8 h3.6" stroke="#333" stroke-width=".7" fill="none"/><path d="M5.6 1.4 l4 4 v9 l-4 -3 z" fill="#ddd" opacity=".8"/><path d="M11.2 1 h3.6 l3 2.6 v14 h-6.6 z" fill="#8a8a8a" stroke="#333" stroke-width="1"/><path d="M14 3.8 v13.6" stroke="#333" stroke-width=".7"/><path d="M6.4 12 h2.4 v5.4" stroke="#333" stroke-width=".7" fill="none"/></g><g transform="translate(649.4,49) scale(1)"><circle cx="6.4" cy="9.4" r="5.8" fill="#fff" stroke="#444" stroke-width="1"/><circle cx="12.6" cy="9.4" r="5.8" fill="#8a8a8a" stroke="#444" stroke-width="1"/><path d="M9.5 4.5 a5.8 5.8 0 0 1 0 9.8 a5.8 5.8 0 0 1 0 -9.8z" fill="#777" stroke="#444" stroke-width=".8"/></g><g transform="translate(683.8,49) scale(1)"><path d="M12 .2 l5.4 6 l-5.4 6 l-4.6 -6 z" fill="#8a8a8a" stroke="#666" stroke-width=".6"/><rect x=".8" y="9" width="8.4" height="8.4" rx="1" fill="#fff" stroke="#333" stroke-width="1"/><path d="M.8 10.8 h8.4 M7.4 9 v8.4" stroke="#333" stroke-width=".5"/><path d="M2 8 q.6 -5 5.4 -6.6" fill="none" stroke="#222" stroke-width="1.3"/><path d="M4.6 .2 l4.6 .2 l-2.4 3.4 z" fill="#222"/><path d="M17 10.6 l-4.4 6" fill="none" stroke="#222" stroke-width="1.3"/><path d="M11.4 18 l.4 -4.4 l3.4 2.2 z" fill="#222"/></g><path d="M713 55.6 l5 4.6 l5 -4.6" fill="none" stroke="#333" stroke-width="2"/><g transform="translate(741,49) scale(1)"><path d="M.6 .6 l16.4 2.8 v14 l-16.4 -2.8 z" fill="#d9d9d9" stroke="#444" stroke-width="1"/><path d="M8.6 2 v7 l8.4 1.4" fill="none" stroke="#444" stroke-width="1"/></g><g transform="translate(774,49) scale(1)"><circle cx="9" cy="9" r="8.6" fill="#fff" stroke="#333" stroke-width="1"/><circle cx="9" cy="9" r="6.6" fill="#fff" stroke="#333" stroke-width="1"/><path d="M9 2.4 v7 h6.6" fill="none" stroke="#333" stroke-width="1.2"/></g><path d="M816.4 49.4 h5.5 l3.9 3.8 v13.2 h-13.8 l-3.7 -3.4 v-5.7 h5.2" fill="#fff" stroke="#222" stroke-width="1.2" stroke-linejoin="round"/><path d="M816.4 49.4 v3" stroke="#222" stroke-width="1.2"/><path d="M810.1 59.1 l2.6 2.6 v4.7 M812.7 61.7 h7.6 v-7.3 l-2.9 -3.1 M820.3 54.4 l5.5 -1.3" fill="none" stroke="#555" stroke-width=".8"/><path d="M817.4 51.3 l2.9 3.1 v7.3 h-2" fill="#e8e8e8" stroke="none"/><path d="M808.3 49.7 h3 q3.5 .4 3.5 5.200" fill="none" stroke="#222" stroke-width="1.500"/><path d="M811.4 54 l3.400 3.600 l3.400 -3.600" fill="none" stroke="#222" stroke-width="1.700"/><g transform="translate(874.8,49) scale(1)"><path d="M3.4 1 q-5 8.4 0 17 M16.8 1 q5 8.4 0 17" fill="none" stroke="#333" stroke-width="1.5"/><circle cx="8.8" cy="8" r="3.4" fill="none" stroke="#333" stroke-width="1.4"/><path d="M11.2 10.6 l3.6 3.8" stroke="#333" stroke-width="1.8"/></g><g transform="translate(908.8,49) scale(1)"><polygon points="10.20,0.00 14.18,2.30 10.20,4.60 6.22,2.30" fill="#fff" stroke="#777" stroke-width="0.8" stroke-linejoin="round"/><polygon points="6.22,2.30 10.20,4.60 10.20,9.20 6.22,6.90" fill="#eee" stroke="#777" stroke-width="0.8" stroke-linejoin="round"/><polygon points="10.20,4.60 14.18,2.30 14.18,6.90 10.20,9.20" fill="#bbb" stroke="#777" stroke-width="0.8" stroke-linejoin="round"/><polygon points="5.00,8.20 9.16,10.60 5.00,13.00 0.84,10.60" fill="#fff" stroke="#777" stroke-width="0.8" stroke-linejoin="round"/><polygon points="0.84,10.60 5.00,13.00 5.00,17.80 0.84,15.40" fill="#eee" stroke="#777" stroke-width="0.8" stroke-linejoin="round"/><polygon points="5.00,13.00 9.16,10.60 9.16,15.40 5.00,17.80" fill="#ccc" stroke="#777" stroke-width="0.8" stroke-linejoin="round"/><polygon points="15.00,8.20 19.16,10.60 15.00,13.00 10.84,10.60" fill="#fff" stroke="#777" stroke-width="0.8" stroke-linejoin="round"/><polygon points="10.84,10.60 15.00,13.00 15.00,17.80 10.84,15.40" fill="#eee" stroke="#777" stroke-width="0.8" stroke-linejoin="round"/><polygon points="15.00,13.00 19.16,10.60 19.16,15.40 15.00,17.80" fill="#bbb" stroke="#777" stroke-width="0.8" stroke-linejoin="round"/></g><g transform="translate(949,49) scale(1)"><polygon points="8.00,0.80 15.27,5.00 8.00,9.20 0.73,5.00" fill="#f2f2f2" stroke="#333" stroke-width="1.1" stroke-linejoin="round"/><polygon points="0.73,5.00 8.00,9.20 8.00,17.60 0.73,13.40" fill="#e0e0e0" stroke="#333" stroke-width="1.1" stroke-linejoin="round"/><polygon points="8.00,9.20 15.27,5.00 15.27,13.40 8.00,17.60" fill="#d0d0d0" stroke="#333" stroke-width="1.1" stroke-linejoin="round"/></g><g transform="translate(981,48.4) scale(1)"><g transform="rotate(-8 10 11)"><rect x="1" y="5.4" width="18" height="11.6" rx="1.2" fill="#2a2a2a"/><rect x="-.4" y="9" width="1.6" height="3.6" fill="#2a2a2a"/><rect x="18.8" y="9" width="1.6" height="3.6" fill="#2a2a2a"/><circle cx="6.6" cy="10.6" r="2.5" fill="#eee"/><circle cx="13.6" cy="10.6" r="2.5" fill="#eee"/><circle cx="7" cy="10.8" r="1.1" fill="#2a2a2a"/><circle cx="14" cy="10.2" r="1.1" fill="#2a2a2a"/><path d="M9 14.4 q3 1.6 5.6 -.8" stroke="#eee" stroke-width="1" fill="none"/><path d="M10 5.4 v-3.6" stroke="#2a2a2a" stroke-width="1.3"/></g><path d="M3.4 .4 l1.4 3 M6.4 .2 l.6 3 M13.4 .2 l-.4 3 M16 .6 l-1.4 2.8 M5 1.8 h3 M12 1.8 h3" stroke="#555" stroke-width=".8" fill="none"/></g><g transform="translate(1048.8,48.4) scale(1)"><g transform="rotate(-8 10 11)"><rect x="1" y="5.4" width="18" height="11.6" rx="1.2" fill="#2a2a2a"/><rect x="-.4" y="9" width="1.6" height="3.6" fill="#2a2a2a"/><rect x="18.8" y="9" width="1.6" height="3.6" fill="#2a2a2a"/><circle cx="6.6" cy="10.6" r="2.5" fill="#eee"/><circle cx="13.6" cy="10.6" r="2.5" fill="#eee"/><circle cx="7" cy="10.8" r="1.1" fill="#2a2a2a"/><circle cx="14" cy="10.2" r="1.1" fill="#2a2a2a"/><path d="M9 14.4 q3 1.6 5.6 -.8" stroke="#eee" stroke-width="1" fill="none"/><path d="M10 5.4 v-3.6" stroke="#2a2a2a" stroke-width="1.3"/></g><path d="M3.4 .4 l1.4 3 M6.4 .2 l.6 3 M13.4 .2 l-.4 3 M16 .6 l-1.4 2.8 M5 1.8 h3 M12 1.8 h3" stroke="#555" stroke-width=".8" fill="none"/></g><g transform="translate(1015.6,49) scale(1)"><rect x="-.6" y="-1" width="19" height="20" fill="#fafafa" stroke="#eee" stroke-width=".5"/><circle cx="4.4" cy="4.6" r="3.2" fill="none" stroke="#c2c2c2" stroke-width="1.1"/><circle cx="13.4" cy="14.4" r="2.2" fill="none" stroke="#c2c2c2" stroke-width="1.1"/><path d="M1.6 7 q5 8 10 9.4 M6.6 2 q7 3.6 9 10.6" fill="none" stroke="#c8c8c8" stroke-width="1"/></g><g transform="translate(1084,49) scale(1)"><path d="M.8 1 h13.4 l2.6 2.4 v14.2 h-13.6 l-2.4 -2.4 z" fill="#ddd" stroke="#888" stroke-width="1"/><rect x="3.4" y="3.6" width="13.2" height="13.8" fill="#8c8c8c"/><rect x="3.4" y="3.6" width="6.6" height="6.9" fill="#a2a2a2"/><rect x="10" y="10.5" width="6.6" height="6.9" fill="#7c7c7c"/></g><g transform="translate(1117,49) scale(1)"><circle cx="10" cy="9.4" r="6" fill="none" stroke="#5a5a5a" stroke-width="3.4"/><path d="M.2 .4 h4.4 l3 3 l-2.6 2.6 z M19.8 .4 h-4.4 l-3 3 l2.6 2.6 z" fill="#5a5a5a"/><path d="M16.4 1.2 l2.6 -1.4 l.8 3.4 z" fill="#5a5a5a"/><rect x=".2" y="16.6" width="19.6" height="2.8" fill="#5a5a5a"/><rect x="4.4" y="14.4" width="3" height="3" fill="#5a5a5a"/><rect x="12.6" y="14.4" width="3" height="3" fill="#5a5a5a"/></g><g transform="translate(1150.6,47.6) scale(1)"><polygon points="17.54,8.25 20.27,8.57 20.27,11.83 17.54,12.15 16.77,14.01 18.47,16.17 16.17,18.47 14.01,16.77 12.15,17.54 11.83,20.27 8.57,20.27 8.25,17.54 6.39,16.77 4.23,18.47 1.93,16.17 3.63,14.01 2.86,12.15 0.13,11.83 0.13,8.57 2.86,8.25 3.63,6.39 1.93,4.23 4.23,1.93 6.39,3.63 8.25,2.86 8.57,0.13 11.83,0.13 12.15,2.86 14.01,3.63 16.17,1.93 18.47,4.23 16.77,6.39" fill="#555" stroke="#333" stroke-width=".8" stroke-linejoin="round"/><circle cx="10.2" cy="10.2" r="3.6" fill="#fff" stroke="#333" stroke-width=".8"/></g><g transform="translate(1188,49.4) scale(1)"><path d="M.6 1.4 h12.8 l-6.4 8.6 z" fill="#9a9a9a" stroke="#555" stroke-width="1"/><path d="M7 10 v4" stroke="#555" stroke-width="1.2"/><rect x="1" y="13.6" width="12" height="1.4" fill="#777"/><rect x="1" y="15.8" width="12" height="1.6" fill="#999"/></g><g transform="translate(1222.5,48.6) scale(1)"><path d="M.6 11.4 l7.6 -7.6 l8 8 l-7.8 7.4 z" fill="#fff" stroke="#333" stroke-width="1.2" stroke-linejoin="round"/><path d="M1.4 12 h14.2 l-7.2 6.8 z" fill="#333"/><path d="M3.4 -.4 l10 10 M6 -.6 l8.6 8.6" stroke="#333" stroke-width="1" fill="none"/><path d="M18 11.6 q2.4 3.6 2 5 q-.4 1.6 -2 1.6 t-2 -1.6 q-.4 -1.4 2 -5z" fill="#333"/></g><rect x="1257.4" y="48.6" width="19.2" height="18.8" rx="2.4" fill="#fff" stroke="#9a9a9a" stroke-width="1"/><rect x="1325.4" y="48.6" width="19.2" height="18.8" rx="2.4" fill="#fff" stroke="#9a9a9a" stroke-width="1"/><rect x="1359.4" y="48.6" width="19.2" height="18.8" rx="2.4" fill="#fff" stroke="#9a9a9a" stroke-width="1"/><g transform="translate(1290.6,49) scale(1)"><g transform="rotate(-6 10 9)"><rect x="1" y="3" width="18.6" height="12.4" rx="2" fill="#fff" stroke="#333" stroke-width="1.6"/><path d="M1.4 5 q0 -2 2 -2 h13.8 q2 0 2 2 v3 h-17.8 z" fill="#333"/><path d="M4 6 h12" stroke="#ddd" stroke-width="1.4" stroke-dasharray="1.6 .6"/></g></g><g transform="translate(1396,49) scale(1)"><path d="M.6 2 h3.6 v8 h4.6 v-9.4 h3.4 l5.4 5.6 v8.6 l-2.6 2.6 h-11 l-3.4 -3 z" fill="#e0e0e0" stroke="#333" stroke-width="1" stroke-linejoin="round"/><path d="M8.8 10 l5.6 5.6 M4.2 10 l4 4.4 v2.8" stroke="#777" stroke-width="1.4" fill="none"/><path d="M12.2 .6 v9.6 l5.4 5" fill="none" stroke="#333" stroke-width=".7"/></g><g transform="translate(1432,49) scale(1)"><path d="M.6 12 l10.8 -2 v-9.4 l5.4 5.4 v9 l-2.4 2.4 h-9.6 z" fill="#ddd" stroke="#333" stroke-width="1" stroke-linejoin="round"/><path d="M11.4 .6 l5.4 5.4 v9 l-2.4 2.4 v-9 l-3 -3 z" fill="#8a8a8a" stroke="#333" stroke-width=".8" stroke-linejoin="round"/><path d="M.6 12 l4.200 5.4" stroke="#333" stroke-width=".8"/></g><g transform="translate(1464.8,49) scale(1)"><path d="M.6 9.4 l10 -1 l3.600 -5.400 l5.400 4.400 l-5.400 6.600 l-9.200 1 z" fill="#ddd" stroke="#333" stroke-width="1" stroke-linejoin="round"/><path d="M10.6 8.400 l3.600 -5.400 l5.400 4.400 l-5.400 6.600 z" fill="#aaa" stroke="#333" stroke-width=".8" stroke-linejoin="round"/><path d="M.6 9.400 l4.400 5.600 M4.600 3.200 l13 13.400" stroke="#333" stroke-width=".9" fill="none"/></g><g transform="translate(1501,49) scale(1)"><path d="M6 .600 h9.600 v17 h-15 v-7 h6.800 q1.400 0 1.400 -1.400 t-1.400 -1.400 h-1.400 q-4 0 -4 -3.600 t4 -3.600z" fill="#8a8a8a" stroke="#333" stroke-width="1"/><path d="M9.800 .600 h5.800 v17 h-9.800 v-3 h5.200 v-6.800 q0 -2 -1.200 -2 z" fill="#ddd" stroke="#333" stroke-width=".8"/></g><g transform="translate(1533.8,49) scale(1)"><rect x=".6" y=".6" width="17.600" height="17.200" fill="#f0f0f0"/><path d="M.8 17.800 v-9.200 l8 -8 h9.400" fill="none" stroke="#333" stroke-width="1.100"/><path d="M.8 .800 h7.800 l-7.800 7.800 z" fill="#8a8a8a"/></g><g transform="translate(1567.8,49) scale(1)"><path d="M1 3 q0 -2 2.400 -2 h10 l3.600 3.600 v10.400 l-2.600 2.600 h-9.400 q-4 -1.400 -4 -5 z" fill="#fff" stroke="#333" stroke-width="1"/><path d="M3.800 1.400 v13.600 M3.800 9.400 h5.200 v-5 M9 9.400 l7.600 7.400" fill="none" stroke="#555" stroke-width=".9"/><path d="M9 8 l5 5.400 v4 l-5 -5.400 z" fill="#999"/><path d="M9.400 4.600 l3 3 l5.800 -6.400" fill="none" stroke="#222" stroke-width="2.200"/></g><g transform="translate(1602,49) scale(1)"><path d="M.2 .800 h17.400 v4.800 h-9.400 q-2.800 0 -2.800 3 t2.800 3 h9.200 v6" fill="none" stroke="#333" stroke-width="1.100"/><path d="M13.800 11.600 v6" stroke="#333" stroke-width="1.100"/></g><path d="M1639.7 53.1 V52.1 A3.4 3.4 0 0 1 1643.1000000000001 48.7 H1644.1000000000001 M1654.3 48.7 H1655.3 A3.4 3.4 0 0 1 1658.7 52.1 V53.1 M1658.7 63.1 V64.1 A3.4 3.4 0 0 1 1655.3 67.5 H1654.3 M1644.1000000000001 67.5 H1643.1000000000001 A3.4 3.4 0 0 1 1639.7 64.1 V63.1 M1647.3 48.7 h3.8 M1647.3 67.5 h3.8 M1639.7 56.0 v4.2 M1658.7 56.0 v4.2" fill="none" stroke="#333" stroke-width="1.3"/><path d="M1649.2 54.2 v7.8 M1645.3 58.1 h7.8" stroke="#222" stroke-width="2"/><g fill="none" stroke="#333" stroke-width="1.2" stroke-linejoin="round"><path d="M1682.600 50.200 q-1.700 0 -1.700 1.800 v3.800 q0 1.700 -2.200 2.100 q2.200 .400 2.200 2.100 v3.800 q0 1.800 1.700 1.800"/><path d="M1695.800 57.600 q-2 .500 -2 2.200 v3.800 q0 1.900 -1.800 1.900"/><path d="M1687.400 52.600 l-3.900 2.300 v5.600 l4 2.600 l5 -2.700 v-2.200 M1683.500 54.900 l4 2.600 l2.400 -1.200 M1687.500 57.500 v5.600"/></g><circle cx="1691" cy="52.900" r="2.100" fill="#333"/><path d="M1691 49.200 v7.600" stroke="#555" stroke-width="1.100" stroke-dasharray="1.100 1.100"/><path d="M1701 55.2 l5 4.6 l5 -4.6" fill="none" stroke="#333" stroke-width="2"/><rect x="1733" y="42" width="161" height="32" rx="4" fill="#efefef"/><rect x="1833.400" y="49.600" width="33" height="18" rx="2" fill="#f4f4f4" stroke="#a8a8a8" stroke-width="1"/><rect x="1867.800" y="49.600" width="16" height="18" rx="2" fill="#f4f4f4" stroke="#a8a8a8" stroke-width="1"/><path d="M1834.600 67.800 h30.600 M1869 67.800 h13.600" stroke="#9a9a9a" stroke-width="1.200"/></svg>
<span class="t" style="left:143.76px;top:50px;font-size:15.5px;line-height:17px;color:#2b2b2b;-webkit-text-stroke:0.18px #2b2b2b;transform:scaleX(0.9179);">Sketch</span>
<span class="t" style="left:840.6px;top:47px;font-size:16.5px;line-height:22px;color:#333;font-family:'Liberation Serif',serif;font-weight:700;-webkit-text-stroke:.5px #333;transform:scaleX(1.04)">(<i>x</i>)</span>
<span class="t" style="left:1260.39px;top:53px;font-size:11.5px;line-height:12px;color:#2b2b2b;transform:scaleX(0.7997);">SM</span>
<span class="t" style="left:1329.80px;top:52px;font-size:12px;line-height:14px;color:#2b2b2b;transform:scaleX(1.0366);">Ai</span>
<span class="t" style="left:1362.17px;top:52px;font-size:12px;line-height:14px;color:#2b2b2b;transform:scaleX(0.9653);">Ds</span>
<span class="t" style="left:1741.88px;top:49px;font-size:15.5px;line-height:17px;color:#2b2b2b;-webkit-text-stroke:0.18px #2b2b2b;transform:scaleX(0.8922);">Search tools...</span>
<span class="t" style="left:1835.46px;top:52px;font-size:12.5px;line-height:14px;color:#2b2b2b;-webkit-text-stroke:0.1px #2b2b2b;transform:scaleX(1.0811);">alt/</span>
<span class="t" style="left:1852.8px;top:52px;font-family:'DejaVu Sans',sans-serif;font-size:9.5px;line-height:12px;color:#2b2b2b;transform:scaleX(.95)">⌥</span>
<span class="t" style="left:1871.95px;top:52px;font-size:12.5px;line-height:14px;color:#2b2b2b;-webkit-text-stroke:0.1px #2b2b2b;transform:scaleX(1.1034);">c</span>
<div class="b" style="left:40px;top:327px;width:200px;height:24px;background:#edf0f3;border-bottom:1px solid #a9cbe9"></div>
<div class="b" style="left:40px;top:379px;width:200px;height:24px;background:#edf0f3;border-bottom:1px solid #a9cbe9"></div>
<div class="b" style="left:40px;top:431px;width:200px;height:24px;background:#edf0f3;border-bottom:1px solid #a9cbe9"></div>
<div class="b" style="left:40px;top:757px;width:200px;height:24px;background:#b1d9f3"></div>
<div class="b" style="left:40px;top:783px;width:200px;height:24px;background:#b1d9f3"></div>
<div class="b" style="left:64px;top:466px;width:171px;height:7px;background:#b9b9b9"></div>
<div class="b" style="left:40px;top:703px;width:200px;height:1px;background:#cfcfcf"></div>
<div class="b" style="left:79px;top:84px;width:158px;height:29.5px;border:1px solid #a9a9a9;border-radius:3.5px;background:#fff"></div>
<svg class="i" style="left:0;top:0" width="300" height="1049" viewBox="0 0 300 1049"><circle cx="15.6" cy="93" r="3" fill="#2b2b2b"/><path d="M15.6 84 v18.4" stroke="#2b2b2b" stroke-width="1.6" stroke-dasharray="1.7 1.7"/><path d="M24.6 93.400 v7.600 M20.800 97.200 h7.600" stroke="#1a56b8" stroke-width="1.900"/><path d="M20 120 q9.600 0 9.600 6 t-9.600 6 q-1.600 0 -3.200 -.400 l-5 3.600 l1.600 -4.800 q-3 -1.600 -3 -4.400 q0 -6 9.600 -6z" fill="#2b2b2b"/><rect x="12.600" y="155.600" width="13.600" height="15.800" rx="1.400" fill="none" stroke="#2b2b2b" stroke-width="1.700"/><path d="M15.600 160.200 h7 M15.600 163.600 h4.600 M15.600 167 h3" stroke="#2b2b2b" stroke-width="1.500"/><path d="M21.400 168.400 l1 -3.200 l5.400 -5.600 l2.200 2.200 l-5.400 5.600 z" fill="#2b2b2b" stroke="#fafafa" stroke-width=".800"/><circle cx="21" cy="199.200" r="6.800" fill="none" stroke="#2b2b2b" stroke-width="1.800"/><path d="M18.800 189.800 h4.400 M21 190 v2.400 M21 199.200 l3 -3.200 M26.400 193 l1.200 -1.200" stroke="#2b2b2b" stroke-width="1.600" fill="none"/><path d="M11.400 196.200 h4 M10.800 199.400 h4 M11.800 202.600 h4" stroke="#2b2b2b" stroke-width="1.300"/><circle cx="19.400" cy="232.600" r="9.400" fill="#2b2b2b"/><path d="M19.400 227 l5 2.900 v5.700 l-5 2.900 l-5 -2.900 v-5.700 z" fill="none" stroke="#fafafa" stroke-width="1.300"/><path d="M19.400 230 l2.400 1.400 v2.700 l-2.400 1.400 l-2.400 -1.400 v-2.700 z" fill="none" stroke="#fafafa" stroke-width=".900"/><path d="M25 239.400 l4.200 3.600" stroke="#2b2b2b" stroke-width="2.400"/><rect x="0" y="251" width="39" height="1" fill="#dcdcdc"/><rect x="12.800" y="260.800" width="14.400" height="16.400" rx="1.600" fill="none" stroke="#2b2b2b" stroke-width="1.700"/><path d="M20.400 265 h4.400" stroke="#2b2b2b" stroke-width="1.800"/><path d="M15.200 264.6 l1.200 1.300 l2.200 -2.600" stroke="#2b2b2b" stroke-width="1" fill="none"/><path d="M20.400 269 h4.400" stroke="#2b2b2b" stroke-width="1.800"/><path d="M15.200 268.6 l1.200 1.300 l2.200 -2.600" stroke="#2b2b2b" stroke-width="1" fill="none"/><path d="M20.400 273 h4.400" stroke="#2b2b2b" stroke-width="1.800"/><path d="M15.200 272.6 l1.200 1.300 l2.200 -2.600" stroke="#2b2b2b" stroke-width="1" fill="none"/><path d="M51.600 93.800 h13.800 l-5.400 6.600 v6 l-3 -2 v-4 z" fill="none" stroke="#333" stroke-width="1.300" stroke-linejoin="round"/><path d="M146.400 129 v-5.400 h5.400 l1.600 1.800 h10 v11.200 h-11.400" fill="none" stroke="#555" stroke-width="1"/><path d="M146.400 132 v4.600 h3" fill="none" stroke="#555" stroke-width="1" stroke-dasharray="1.500 1.500"/><path d="M150.600 128.600 v7.600 M146.800 132.400 h7.600" stroke="#1a56b8" stroke-width="1.800"/><rect x="179.200" y="123.200" width="4.200" height="13.600" fill="#2b2b2b"/><rect x="187" y="123.200" width="4.200" height="13.600" fill="#2b2b2b"/><circle cx="215" cy="130.800" r="7" fill="none" stroke="#2b2b2b" stroke-width="1.700"/><path d="M212.800 121.600 h4.400 M215 121.800 v2.200 M215 130.800 l3.200 3.400 M220.400 124.800 l1.200 -1.200" stroke="#2b2b2b" stroke-width="1.500" fill="none"/><rect x="49.200" y="170.6" width="1" height="102.79999999999998" fill="#cfcfcf"/><rect x="45" y="273.4" width="9" height="1" fill="#cfcfcf"/><rect x="49.200" y="352" width="1" height="129.5" fill="#cfcfcf"/><rect x="45" y="481.5" width="9" height="1" fill="#cfcfcf"/><rect x="49.200" y="508" width="1" height="77" fill="#cfcfcf"/><rect x="45" y="585" width="9" height="1" fill="#cfcfcf"/><rect x="49.200" y="612" width="1" height="51.39999999999998" fill="#cfcfcf"/><rect x="45" y="663.4" width="9" height="1" fill="#cfcfcf"/><rect x="49.200" y="690" width="1" height="13" fill="#cfcfcf"/><path d="M44.600 154.4 l5.600 5.400 l5.600 -5.400" fill="none" stroke="#555" stroke-width="2"/><path d="M44.600 336.4 l5.600 5.400 l5.600 -5.400" fill="none" stroke="#555" stroke-width="2"/><path d="M44.600 492.4 l5.600 5.400 l5.600 -5.400" fill="none" stroke="#555" stroke-width="2"/><path d="M44.600 596.4 l5.600 5.400 l5.600 -5.400" fill="none" stroke="#555" stroke-width="2"/><path d="M44.600 674.4 l5.600 5.400 l5.600 -5.400" fill="none" stroke="#555" stroke-width="2"/><path d="M44.600 714.4 l5.600 5.400 l5.600 -5.400" fill="none" stroke="#555" stroke-width="2"/><path d="M47.200 281.4 l5.400 5.600 l-5.400 5.600" fill="none" stroke="#555" stroke-width="2"/><circle cx="72.400" cy="183" r="3.300" fill="none" stroke="#555" stroke-width="1"/><circle cx="72.400" cy="183" r="1.400" fill="#555"/><path d="M65.800 201.8 l13.800 2.200 v11.800 l-13.800 -2.200 z" fill="#d8d8d8" stroke="#555" stroke-width="1"/><path d="M72.400 203 v5.800 l7.200 1.200" fill="none" stroke="#555" stroke-width="1"/><path d="M65.800 227.8 l13.800 2.200 v11.800 l-13.800 -2.200 z" fill="#d8d8d8" stroke="#555" stroke-width="1"/><path d="M72.400 229 v5.800 l7.200 1.200" fill="none" stroke="#555" stroke-width="1"/><path d="M65.800 253.8 l13.800 2.200 v11.800 l-13.800 -2.200 z" fill="#d8d8d8" stroke="#555" stroke-width="1"/><path d="M72.400 255 v5.800 l7.200 1.200" fill="none" stroke="#555" stroke-width="1"/><path d="M73.600 280 l6.400 3.400 v7.200 l-6.400 3.600 l-6.400 -3.600 v-7.200 z" fill="#f2f2f2" stroke="#aaa" stroke-width="1.100"/><path d="M67.200 283.4 l6.400 3.400 l6.400 -3.400 M73.600 286.8 v7.400" fill="none" stroke="#aaa" stroke-width="1.100"/><circle cx="200" cy="287" r="3" fill="#2b2b2b"/><path d="M200 278 v18" stroke="#2b2b2b" stroke-width="1.600" stroke-dasharray="1.700 1.700"/><circle cx="200" cy="573" r="3" fill="#2b2b2b"/><path d="M200 564 v18" stroke="#2b2b2b" stroke-width="1.600" stroke-dasharray="1.700 1.700"/><g fill="none" stroke="#333" stroke-width="1.100" stroke-linejoin="round"><path d="M48.6 317.4 l1.400 -3.800 l8.600 -8.600 l2.400 2.400 l-8.600 8.600 z"/><path d="M50 313.6 l2.400 2.400"/></g><path d="M46 319.2 h15" stroke="#2a62b0" stroke-width="1"/><path d="M66.400 333.6 a1 1 0 0 1 1 -1 h4.200 l1.600 1.800 h6.600 a1 1 0 0 1 1 1 v8.400 a1 1 0 0 1 -1 1 h-12.400 a1 1 0 0 1 -1 -1 z" fill="#fff" stroke="#666" stroke-width="1.100"/><g fill="none" stroke="#aaa" stroke-width="1.100" stroke-linejoin="round"><path d="M68.0 369.4 l1.400 -3.800 l8.600 -8.600 l2.400 2.400 l-8.600 8.600 z"/><path d="M69.4 365.6 l2.400 2.400"/></g><path d="M65.4 371.2 h15" stroke="#b9b0d8" stroke-width="1"/><g opacity="1"><path d="M66.800 383.8 h11 l2.200 2.200 v12 h-11.400 l-2.800 -2.600 v-10.600 z" fill="#fff" stroke="#333" stroke-width="1"/><path d="M65.800 385 l2.800 2.200 h11.400 M68.600 387.2 v10.800" fill="none" stroke="#333" stroke-width=".700"/><rect x="71.200" y="389.2" width="8.400" height="8.400" fill="#777" stroke="#333" stroke-width=".900"/></g><g fill="none" stroke="#aaa" stroke-width="1.100" stroke-linejoin="round"><path d="M68.0 421.4 l1.400 -3.800 l8.600 -8.600 l2.400 2.400 l-8.600 8.600 z"/><path d="M69.4 417.6 l2.400 2.400"/></g><path d="M65.4 423.2 h15" stroke="#b9b0d8" stroke-width="1"/><g opacity="1"><path d="M66.800 435.8 h11 l2.200 2.200 v12 h-11.400 l-2.800 -2.600 v-10.600 z" fill="#fff" stroke="#333" stroke-width="1"/><path d="M65.800 437 l2.800 2.200 h11.400 M68.600 439.2 v10.800" fill="none" stroke="#333" stroke-width=".700"/><rect x="71.200" y="441.2" width="8.400" height="8.400" fill="#777" stroke="#333" stroke-width=".900"/></g><path d="M66.400 489.6 a1 1 0 0 1 1 -1 h4.200 l1.600 1.800 h6.600 a1 1 0 0 1 1 1 v8.400 a1 1 0 0 1 -1 1 h-12.400 a1 1 0 0 1 -1 -1 z" fill="#fff" stroke="#aaa" stroke-width="1.100"/><g fill="none" stroke="#aaa" stroke-width="1.100" stroke-linejoin="round"><path d="M68.0 525.4 l1.400 -3.800 l8.600 -8.600 l2.400 2.400 l-8.600 8.600 z"/><path d="M69.4 521.6 l2.400 2.400"/></g><path d="M65.4 527.2 h15" stroke="#b9b0d8" stroke-width="1"/><g opacity="1"><path d="M66.800 539.8 h11 l2.200 2.200 v12 h-11.400 l-2.800 -2.600 v-10.600 z" fill="#fff" stroke="#999" stroke-width="1"/><path d="M65.800 541 l2.800 2.200 h11.400 M68.600 543.2 v10.800" fill="none" stroke="#999" stroke-width=".700"/><rect x="71.200" y="545.2" width="8.400" height="8.400" fill="#bbb" stroke="#999" stroke-width=".900"/></g><path d="M65.400 565.800 l5.600 -1 l9 3 v12.600 l-8.400 -.400 l-6.200 -3.400 z" fill="#ddd" stroke="#8a8a8a" stroke-width="1"/><path d="M72 568.400 v11.600" stroke="#8a8a8a" stroke-width=".800"/><path d="M66.800 568.600 l3.600 1.200 M66.800 572 l3.600 1.200 M66.800 575.200 l3.600 1.400" stroke="#777" stroke-width="1.800" stroke-dasharray="1.400 .900"/><rect x="74" y="570.600" width="4.400" height="7" fill="#bbb" stroke="#999" stroke-width=".600"/><path d="M66.400 593.6 a1 1 0 0 1 1 -1 h4.200 l1.600 1.800 h6.600 a1 1 0 0 1 1 1 v8.400 a1 1 0 0 1 -1 1 h-12.400 a1 1 0 0 1 -1 -1 z" fill="#fff" stroke="#aaa" stroke-width="1.100"/><g fill="none" stroke="#aaa" stroke-width="1.100" stroke-linejoin="round"><path d="M68.0 629.4 l1.400 -3.800 l8.600 -8.600 l2.400 2.400 l-8.600 8.600 z"/><path d="M69.4 625.6 l2.400 2.400"/></g><path d="M65.4 631.2 h15" stroke="#b9b0d8" stroke-width="1"/><g opacity="1"><path d="M66.800 643.8 h11 l2.200 2.200 v12 h-11.400 l-2.800 -2.600 v-10.600 z" fill="#fff" stroke="#999" stroke-width="1"/><path d="M65.800 645 l2.800 2.200 h11.400 M68.600 647.2 v10.800" fill="none" stroke="#999" stroke-width=".700"/><rect x="71.200" y="649.2" width="8.400" height="8.400" fill="#bbb" stroke="#999" stroke-width=".900"/></g><path d="M66.400 671.6 a1 1 0 0 1 1 -1 h4.200 l1.600 1.800 h6.600 a1 1 0 0 1 1 1 v8.400 a1 1 0 0 1 -1 1 h-12.400 a1 1 0 0 1 -1 -1 z" fill="#fff" stroke="#aaa" stroke-width="1.100"/><path d="M66 744 l5.600 -2 v-4.600 l3.400 -1.800 h3 l2 1.800 v12.400 h-11 l-3 -2.400 z" fill="#fff" stroke="#444" stroke-width="1.100" stroke-linejoin="round"/><path d="M69 746.4 l5.600 -2 v-5 l5 -.400 M69 746.4 v3.400" fill="none" stroke="#444" stroke-width=".800"/><path d="M66 770 l5.600 -2 v-4.600 l3.400 -1.800 h3 l2 1.800 v12.400 h-11 l-3 -2.400 z" fill="#fff" stroke="#444" stroke-width="1.100" stroke-linejoin="round"/><path d="M69 772.4 l5.600 -2 v-5 l5 -.400 M69 772.4 v3.400" fill="none" stroke="#444" stroke-width=".800"/><path d="M66 796 l5.600 -2 v-4.600 l3.400 -1.800 h3 l2 1.800 v12.400 h-11 l-3 -2.400 z" fill="#fff" stroke="#444" stroke-width="1.100" stroke-linejoin="round"/><path d="M69 798.4 l5.600 -2 v-5 l5 -.400 M69 798.4 v3.400" fill="none" stroke="#444" stroke-width=".800"/></svg>
<span class="t" style="left:85.92px;top:91px;font-size:14px;line-height:16px;color:#7a7a7a;-webkit-text-stroke:0.3px #7a7a7a;font-style:italic;transform:scaleX(0.9110);">Filter by name or type</span>
<span class="t" style="left:44.02px;top:123px;font-size:13.5px;line-height:15px;color:#333;-webkit-text-stroke:0.3px #333;">Features (19)</span>
<span class="t" style="left:63.23px;top:150px;font-size:13.5px;line-height:15px;color:#333;-webkit-text-stroke:0.3px #333;transform:scaleX(0.9949);">Default geometry</span>
<span class="t" style="left:85.01px;top:176px;font-size:13.5px;line-height:15px;color:#333;-webkit-text-stroke:0.3px #333;transform:scaleX(0.9741);">Origin</span>
<span class="t" style="left:84.92px;top:202px;font-size:13.5px;line-height:15px;color:#333;-webkit-text-stroke:0.3px #333;transform:scaleX(1.0418);">Top</span>
<span class="t" style="left:85.19px;top:228px;font-size:13.5px;line-height:15px;color:#333;-webkit-text-stroke:0.3px #333;transform:scaleX(1.0294);">Front</span>
<span class="t" style="left:85.22px;top:254px;font-size:13.5px;line-height:15px;color:#333;-webkit-text-stroke:0.3px #333;">Right</span>
<span class="t" style="left:85.92px;top:280px;font-size:13.5px;line-height:15px;color:#a6a6a6;-webkit-text-stroke:0.3px #a6a6a6;transform:scaleX(0.9491);">Origin Cube</span>
<span class="t" style="left:66.13px;top:306px;font-size:13.5px;line-height:15px;color:#333;-webkit-text-stroke:0.3px #333;transform:scaleX(0.9896);">Layout Sketch</span>
<span class="t" style="left:85.83px;top:332px;font-size:13.5px;line-height:15px;color:#333;-webkit-text-stroke:0.3px #333;transform:scaleX(0.9888);">Plates (4)</span>
<span class="t" style="left:85.03px;top:358px;font-size:13.5px;line-height:15px;color:#a6a6a6;-webkit-text-stroke:0.3px #a6a6a6;transform:scaleX(0.9899);">Plate Sketch</span>
<span class="t" style="left:85.03px;top:384px;font-size:13.5px;line-height:15px;color:#333;-webkit-text-stroke:0.3px #333;transform:scaleX(0.9910);">Plate Extrude</span>
<span class="t" style="left:85.14px;top:410px;font-size:13.5px;line-height:15px;color:#a6a6a6;-webkit-text-stroke:0.3px #a6a6a6;transform:scaleX(0.9714);">Top Plate Sketch w/ M...</span>
<span class="t" style="left:85.13px;top:436px;font-size:13.5px;line-height:15px;color:#333;-webkit-text-stroke:0.3px #333;transform:scaleX(0.9829);">Top Plate Extrude</span>
<span class="t" style="left:86.61px;top:488px;font-size:13.5px;line-height:15px;color:#9c9c9c;-webkit-text-stroke:0.3px #9c9c9c;font-style:italic;transform:scaleX(0.9755);">Tubes (3)</span>
<span class="t" style="left:86.32px;top:514px;font-size:13.5px;line-height:15px;color:#9c9c9c;-webkit-text-stroke:0.3px #9c9c9c;font-style:italic;transform:scaleX(0.9730);">Tube Sketch</span>
<span class="t" style="left:86.31px;top:540px;font-size:13.5px;line-height:15px;color:#9c9c9c;-webkit-text-stroke:0.3px #9c9c9c;font-style:italic;transform:scaleX(0.9762);">Tube Extrude</span>
<span class="t" style="left:85.88px;top:566px;font-size:13.5px;line-height:15px;color:#9c9c9c;-webkit-text-stroke:0.3px #9c9c9c;font-style:italic;transform:scaleX(0.9525);">1x1 Convert</span>
<span class="t" style="left:86.31px;top:592px;font-size:13.5px;line-height:15px;color:#9c9c9c;-webkit-text-stroke:0.3px #9c9c9c;font-style:italic;transform:scaleX(0.9720);">Motor Spacer (2)</span>
<span class="t" style="left:85.81px;top:618px;font-size:13.5px;line-height:15px;color:#9c9c9c;-webkit-text-stroke:0.3px #9c9c9c;font-style:italic;transform:scaleX(0.9743);">Motor Spacer Sketch</span>
<span class="t" style="left:85.81px;top:644px;font-size:13.5px;line-height:15px;color:#9c9c9c;-webkit-text-stroke:0.3px #9c9c9c;font-style:italic;transform:scaleX(0.9680);">Motor Mount Spacer</span>
<span class="t" style="left:87.10px;top:670px;font-size:13.5px;line-height:15px;color:#9c9c9c;-webkit-text-stroke:0.3px #9c9c9c;font-style:italic;transform:scaleX(0.9863);">Belts (4)</span>
<span class="t" style="left:63.24px;top:710px;font-size:13.5px;line-height:15px;color:#333;-webkit-text-stroke:0.3px #333;transform:scaleX(0.9816);">Parts (3)</span>
<span class="t" style="left:85.02px;top:736px;font-size:13.5px;line-height:15px;color:#333;-webkit-text-stroke:0.3px #333;transform:scaleX(0.9505);">Origin Cube</span>
<span class="t" style="left:85.22px;top:762px;font-size:13.5px;line-height:15px;color:#2b3a48;-webkit-text-stroke:0.3px #2b3a48;">Bottom Plate</span>
<span class="t" style="left:85.03px;top:788px;font-size:13.5px;line-height:15px;color:#2b3a48;-webkit-text-stroke:0.3px #2b3a48;transform:scaleX(0.9943);">Top Plate</span>
<div class="b" style="left:40px;top:690px;width:200px;height:13px;overflow:hidden"><span class="t" style="left:46.74px;top:6px;font-size:13.5px;line-height:15px;color:#9c9c9c;-webkit-text-stroke:0.3px #9c9c9c;font-style:italic;transform:scaleX(0.9660);">#Belt_Distance = (7/1</span><span class="t" style="left:23.5px;top:3px;font-size:16px;line-height:20px;color:#aaa;font-family:'Liberation Serif',serif;font-weight:700;transform:scaleX(.9)">(<i>x</i>)</span></div>
<svg class="i" style="left:0;top:0" width="1919" height="1079" viewBox="0 0 1919 1079"><path d="M74 1050.600 h34 l9 13.400 l-9 13 h-32 q-2 0 -2 -2 z" fill="#f0f0f0"/><path d="M108.500 1050.600 h128 q2 0 3 1.600 l6.400 11.800 l-6.400 11.600 q-1 1.400 -3 1.400 h-128 l9 -13 z" fill="#fff"/><path d="M108.500 1050.600 l9 13.400 l-9 13" fill="none" stroke="#dcdcdc" stroke-width="1"/><path d="M247 1050.600 h200 v23.400 q0 3 -3 3 h-194 q-3 0 -3 -3 z" fill="#ebebeb"/><rect x="440.500" y="1050.600" width="7" height="28.400" fill="#e0e0e0" opacity="0"/><path d="M449.200 1049 h199.600 v25.6 q0 3.400 -3 3.400 h-193.600 q-3 0 -3 -3.400 z" fill="#fff"/><path d="M449.400 1075.600 h199.200 q-.200 2.400 -3 2.400 h-193.200 q-2.800 0 -3 -2.400 z" fill="#1a56b8"/><path d="M56.600 1057.200 v14.800 M49.200 1064.600 h14.800" stroke="#555" stroke-width="2.800" fill="none"/><path d="M82.800 1062.600 l9.200 -9 l3.200 3.200 v-2.400 h2.800 v5.200 l3 3 h-2.400 v8 h-4.800 v-5.400 h-3.600 v5.400 h-4.800 v-8 z" fill="#5a5a5a"/><circle cx="267" cy="1062.400" r="6.800" fill="#6c9fd6"/><circle cx="267" cy="1062.400" r="2.300" fill="#fff"/><path d="M267 1055.600 v2.600 M267 1066.600 v2.600" stroke="#cfe0f4" stroke-width="1.600"/><path d="M278.600 1054.200 h13.400 l3.600 3.400 v13.800 h-13.600 l-3.400 -3.400 z" fill="#fff" stroke="#2b2b2b" stroke-width="1"/><path d="M278.600 1054.200 h11 v11.400 h-11 z" fill="#8a8a8a" stroke="#2b2b2b" stroke-width="1"/><rect x="282.400" y="1057.800" width="8" height="8" fill="#9a9a9a" stroke="#666" stroke-width=".700"/><path d="M278.600 1067.600 l3.400 3.400 M289.600 1065.600 l6 5.800" stroke="#2b2b2b" stroke-width=".800"/><g fill="#fff" stroke="#2b2b2b" stroke-width="1"><path d="M469.400 1056.200 l2 -2 h4.800 l1.600 1.600 v15.200 h-6.400 l-2 -1.600 z"/><path d="M471.400 1056 v15 M469.400 1056.200 l2 1.200 h6.200" fill="none" stroke-width=".800"/><path d="M461.400 1060.600 l1.600 -1.800 h5.400 l1.200 1.600 v9.800 l-1.200 1.400 h-5 l-2 -1.800 z"/><path d="M464.400 1061 v10.400 M461.400 1060.600 l3 .800 h5" fill="none" stroke-width=".800"/></g><rect x="11" y="1059.200" width="17.800" height="7.600" fill="#2b2b2b"/><circle cx="22" cy="1066.600" r="4.300" fill="#fafafa" stroke="#2b2b2b" stroke-width="1.700"/><path d="M25 1069.800 l3.400 3.600" stroke="#2b2b2b" stroke-width="2"/><g fill="none" stroke="#2b2b2b" stroke-width="1.100"><path d="M1822.400 1036.600 h11 q4.600 -.600 4.600 -3.600 v5 q-.400 3.400 -4.600 3.800 h-11 z" fill="#fff"/><ellipse cx="1832.600" cy="1033" rx="5.400" ry="2.900" fill="#fff"/><ellipse cx="1832.600" cy="1033" rx="2.600" ry="1.200"/><path d="M1824.600 1039.600 v1.600 M1827 1039.600 v1.600 M1829.400 1039.600 v1.600 M1831.800 1039.600 v1.600 M1834.200 1039.400 v1.600"/></g><g fill="none" stroke="#2b2b2b" stroke-width="1.200"><path d="M1855.600 1042.400 v-2.600 a9.400 9.400 0 0 1 18.800 0 v2.600 z" fill="#fff"/><path d="M1859.800 1040.200 a5.200 5.200 0 0 1 10.400 0 l-3 0 q-2.200 -2.400 -4.400 0 z" stroke-width="1.400"/><path d="M1857.400 1039.600 a7.600 7.600 0 0 1 15.200 0" stroke="#888" stroke-width="1" stroke-dasharray="1 1"/></g><g fill="none" stroke="#2b2b2b"><path d="M1895.600 1029.400 h8.800 M1900 1029.400 v10.600" stroke-width="1.400"/><path d="M1895.600 1029.600 l-1.800 8 M1895.600 1029.600 l1.800 8 M1904.400 1029.600 l-1.800 8 M1904.400 1029.600 l1.800 8" stroke-width=".900"/><path d="M1893.200 1038 h4.800 M1902 1038 h4.800 M1893 1042 h14" stroke-width="1.700"/></g></svg>
<span class="t" style="left:130.21px;top:1054px;font-size:15.5px;line-height:17px;color:#6a6a6a;-webkit-text-stroke:0.18px #6a6a6a;transform:scaleX(0.8750);">Exercise 7 - Ver</span>
<span class="t" style="left:300.19px;top:1055px;font-size:15.5px;line-height:17px;color:#6a6a6a;-webkit-text-stroke:0.18px #6a6a6a;transform:scaleX(0.8953);">Exercise 7 Assembly</span>
<span class="t" style="left:482.10px;top:1055px;font-size:15.5px;line-height:17px;color:#333;-webkit-text-stroke:0.18px #333;transform:scaleX(0.8871);">Exercise 7 Part Studio</span>
<svg class="i" style="left:0;top:0" width="1919" height="1079" viewBox="0 0 1919 1079"><rect x="1888.500" y="400.5" width="31" height="132" fill="#fff" stroke="#9a9a9a" stroke-width="1"/><path d="M1888.500 433.5 h31" stroke="#9a9a9a" stroke-width="1"/><path d="M1888.500 466.5 h31" stroke="#9a9a9a" stroke-width="1"/><path d="M1888.500 499.5 h31" stroke="#9a9a9a" stroke-width="1"/><rect x="1888.500" y="543.5" width="31" height="165" fill="#fff" stroke="#9a9a9a" stroke-width="1"/><path d="M1888.500 576.5 h31" stroke="#9a9a9a" stroke-width="1"/><path d="M1888.500 609.5 h31" stroke="#9a9a9a" stroke-width="1"/><path d="M1888.500 642.5 h31" stroke="#9a9a9a" stroke-width="1"/><path d="M1888.500 675.5 h31" stroke="#9a9a9a" stroke-width="1"/><path d="M1896.600 421 l8 -11.400 l4.200 1.600 l4.400 4 l.600 6 z" fill="#9a9a9a"/><path d="M1904.600 409.600 l4.200 1.600 l-6.600 9.800 z" fill="#777"/><rect x="1896.400" y="421" width="19" height="5.600" rx="1" fill="#ddd" stroke="#888" stroke-width=".900"/><rect x="1896.400" y="421" width="6" height="5.600" fill="#fff" stroke="#888" stroke-width=".900"/><polygon points="1906.4,444.0 1913.0,447.8 1913.0,455.4 1906.4,459.2 1899.8,455.4 1899.8,447.8" fill="#fff" stroke="#333" stroke-width="1"/><path d="M1899.8 447.8 L1906.4 451.6 L1913.0 447.8 M1906.4 451.6 V459.2" fill="none" stroke="#333" stroke-width="1"/><rect x="1895" y="441" width="9" height="8" fill="#1a56b8"/><path d="M1898 441 v8 M1901 441 v8 M1895 443.7 h9 M1895 446.4 h9" stroke="#fff" stroke-width=".700"/><polygon points="1905.6,479.0 1910.8,482.0 1910.8,488.0 1905.6,491.0 1900.4,488.0 1900.4,482.0" fill="#fff" stroke="#444" stroke-width="0.9"/><path d="M1900.4 482.0 L1905.6 485 L1910.8 482.0 M1905.6 485 V491.0" fill="none" stroke="#444" stroke-width="0.9"/><rect x="1895.4" y="473.6" width="9" height="8" fill="#444"/><path d="M1898.4 473.6 v8 M1901.4 473.6 v8 M1895.4 476.3 h9 M1895.4 479.0 h9" stroke="#fff" stroke-width=".700"/><path d="M1898.400 483.600 q-1.400 0 -1.400 1.400 v2.200 q0 1.200 -1.200 1.400 q1.200 .200 1.200 1.400 v2.200 q0 1.400 1.400 1.400 M1912.400 479.600 q1.400 0 1.400 1.400 v3 q0 1.200 1.200 1.400 q-1.200 .200 -1.200 1.400 v3.400 q0 1.400 -1.400 1.400" fill="none" stroke="#333" stroke-width="1"/><rect x="1896" y="507" width="9" height="8" fill="#444"/><path d="M1899 507 v8 M1902 507 v8 M1896 509.7 h9 M1896 512.4 h9" stroke="#fff" stroke-width=".700"/><path d="M1897.600 515.400 q-3 6 0 12 M1912.600 511 q3.400 6.400 0 14" fill="none" stroke="#222" stroke-width="1.400"/><rect x="1893.400" y="548.1" width="23" height="23" rx="3" fill="#dcdcdc" stroke="none"/><path d="M1904.900 558.600 q-1.600 -5.600 -7.400 -6.400 q-.800 5.200 3 7.800 q-2.800 2.400 -.800 6.600 q3.400 -.400 5.200 -4.200 q1.800 3.800 5.200 4.200 q2 -4.200 -.800 -6.600 q3.800 -2.600 3 -7.800 q-5.800 .800 -7.400 6.400z" fill="#111"/><rect x="1893.400" y="581.1" width="23" height="23" rx="3" fill="#dcdcdc" stroke="none"/><rect x="1895.600" y="583.600" width="18.600" height="17.800" fill="#1a56b8" stroke="#0c3a8a" stroke-width="1"/><rect x="1893.400" y="614.1" width="23" height="23" rx="3" fill="#dcdcdc" stroke="none"/><g transform="translate(1894.800,616.400) scale(1)"><g transform="rotate(-8 10 11)"><rect x="1" y="5.400" width="18" height="11.600" rx="1.200" fill="#2a2a2a"/><circle cx="6.600" cy="10.600" r="2.700" fill="#eee"/><circle cx="13.600" cy="10.600" r="2.700" fill="#eee"/><circle cx="7" cy="10.800" r="1.300" fill="#2a6ad0"/><circle cx="14" cy="10.200" r="1.300" fill="#2a6ad0"/><path d="M9 14.400 q3 1.600 5.600 -.800" stroke="#eee" stroke-width="1" fill="none"/><path d="M10 5.400 v-3.600" stroke="#2a2a2a" stroke-width="1.300"/></g><path d="M4 .800 l1.400 3 M7 .600 l.600 3 M13.400 .600 l-.400 3 M16 1 l-1.400 2.800" stroke="#3a5fb0" stroke-width=".900" fill="none"/></g><rect x="1893.400" y="647.1" width="23" height="23" rx="3" fill="#dcdcdc" stroke="none"/><rect x="1895" y="649" width="19.800" height="19" rx="1.500" fill="#5cb85c"/><rect x="1893.400" y="680.1" width="23" height="23" rx="3" fill="#dcdcdc" stroke="none"/><rect x="1895.600" y="682.600" width="18.600" height="17.800" fill="#1a56b8" stroke="#0c2a6a" stroke-width="1.200"/><path d="M1897.600 653.7 q4 -1.200 6.800 .600 v9.600 q-2.800 -1.600 -6.800 -.400 z M1912.200 653.7 q-4 -1.200 -6.800 .600 v9.600 q2.800 -1.600 6.800 -.400 z" fill="#fff"/><path d="M1897.600 686.7 q4 -1.200 6.800 .600 v9.600 q-2.800 -1.600 -6.800 -.400 z M1912.200 686.7 q-4 -1.200 -6.800 .600 v9.600 q2.800 -1.600 6.800 -.400 z" fill="#fff"/><polygon points="1830.1,90.8 1837.9,100.9 1822.3,100.9" fill="#9b9b9b"/><polygon points="1830.1,241.0 1837.9,231.0 1822.3,231.0" fill="#9b9b9b"/><polygon points="1755.0,165.9 1765.1,158.1 1765.1,173.7" fill="#9b9b9b"/><polygon points="1905.2,165.9 1895.2,158.1 1895.2,173.7" fill="#9b9b9b"/><path d="M1809.3 102.0 Q1793.4 106.7 1783.4 119.2" fill="none" stroke="#9b9b9b" stroke-width="4.600"/><polygon points="1775.9,125.0 1777.1,113.4 1788.4,123.7" fill="#9b9b9b"/><path d="M1851.0 102.0 Q1866.8 106.7 1876.8 119.2" fill="none" stroke="#9b9b9b" stroke-width="4.600"/><polygon points="1884.3,125.0 1883.2,113.4 1871.8,123.7" fill="#9b9b9b"/><polygon points="1791.4,146.7 1800.1,135.0 1823.4,123.7 1860.1,130.0 1868.8,138.4 1868.8,186.8 1860.1,196.8 1840.1,206.8 1830.1,204.3 1800.1,197.6 1791.4,190.1" fill="#e8ecee" stroke="#e8ecee" stroke-width="3" stroke-linejoin="round"/><path d="M1788.4 197.6 L1816.8 172.6" stroke="#3aa04a" stroke-width="1" opacity=".8"/><polygon points="1806.8,141.7 1824.3,128.4 1854.3,135.9 1841.8,150.9" fill="#fff" stroke="#fff" stroke-width="4" stroke-linejoin="round"/><polygon points="1797.6,158.4 1831.8,166.7 1831.8,199.3 1797.6,190.9" fill="#fff" stroke="#fff" opacity=".82" stroke-width="5" stroke-linejoin="round"/><polygon points="1847.6,166.7 1864.3,150.9 1864.3,183.4 1847.6,199.3" fill="#fff" stroke="#fff" stroke-width="5" stroke-linejoin="round"/><ellipse cx="1797.6" cy="147.6" rx="4.3" ry="5.0" fill="#fff"/><ellipse cx="1839.3" cy="160.9" rx="6.0" ry="6.0" fill="#fff"/><ellipse cx="1861.0" cy="137.5" rx="3.0" ry="2.7" fill="#fff"/><ellipse cx="1836.8" cy="203.4" rx="6.0" ry="2.3" fill="#fff"/><path d="M1819.3 151.7 V166.7" stroke="#d5e6d8" stroke-width="1"/><path d="M1788.4 146.7 L1788.4 197.6" stroke="#2a2ac8" stroke-width="1.300"/><path d="M1788.4 197.6 L1839.3 212.6" stroke="#d83a3a" stroke-width="1.300"/><path d="M1875 223.400 l8.600 2.600 v10.600 l-8.600 4 l-8.600 -4 v-10.600 z" fill="#b0b0b0" stroke="#333" stroke-width="1.100" stroke-linejoin="round"/><path d="M1875 229.200 l8.600 -3.200 v10.600 l-8.600 4 z" fill="#e8e8e8" stroke="#333" stroke-width=".900" stroke-linejoin="round"/><path d="M1866.400 226 l8.600 3.200 l8.600 -3.200 l-8.600 -2.600 z" fill="#fff" stroke="#333" stroke-width=".900" stroke-linejoin="round"/><path d="M1892 230.200 h8 l-4 4 z" fill="#2b2b2b"/><rect x="245.500" y="538.500" width="32" height="33" fill="#fff" stroke="#b5b5b5" stroke-width="1"/><rect x="245" y="539" width="1.500" height="32" fill="#fff"/><path d="M256.600 549.200 h13.400 M256.600 553.600 h13.400 M256.600 558 h13.400 M256.600 562.400 h13.400" stroke="#555" stroke-width="1.300"/><path d="M254.600 548 v15.400" stroke="#555" stroke-width="1.100"/><path d="M252.400 547.600 l2.200 2 l2.200 -2" stroke="#333" stroke-width="1.100" fill="none"/></svg>
<span class="t" style="left:1803px;top:169.500px;font-size:11.500px;line-height:14px;color:#222;transform:matrix(1,.27,0,1,0,0) scaleX(.96)">Front</span>
<span class="t" style="left:1822.500px;top:131px;font-size:9px;line-height:11px;color:#333;font-style:italic;transform:matrix(1,.42,-.6,.62,0,0)">Top</span>
<span class="t" style="left:1848.500px;top:171.500px;font-size:9.500px;line-height:11px;color:#333;font-style:italic;transform:matrix(.72,-.6,0,1,0,0)">Right</span>
<span class="t" style="left:1784.84px;top:130px;font-size:13px;line-height:15px;color:#2a2ac8;font-weight:700;transform:scaleX(0.9148);">Z</span>
<span class="t" style="left:1844.10px;top:207px;font-size:13px;line-height:15px;color:#e0506a;-webkit-text-stroke:0.3px #e0506a;transform:scaleX(0.9181);">X</span>
<span class="t" style="left:1819.500px;top:160px;font-size:9px;line-height:11px;color:#bfe0c4;">Y</span>
<span class="t" style="left:1900.5px;top:507px;font-size:15px;line-height:18px;color:#222;font-family:'Liberation Serif',serif;font-weight:700;font-style:italic;-webkit-text-stroke:.4px #222">x</span>
<span class="t" style="left:1897.43px;top:588px;font-size:11.5px;line-height:12px;color:#fff;font-weight:700;transform:scaleX(0.8931);font-family:'Liberation Serif',serif;">MK</span>
</body></html>
